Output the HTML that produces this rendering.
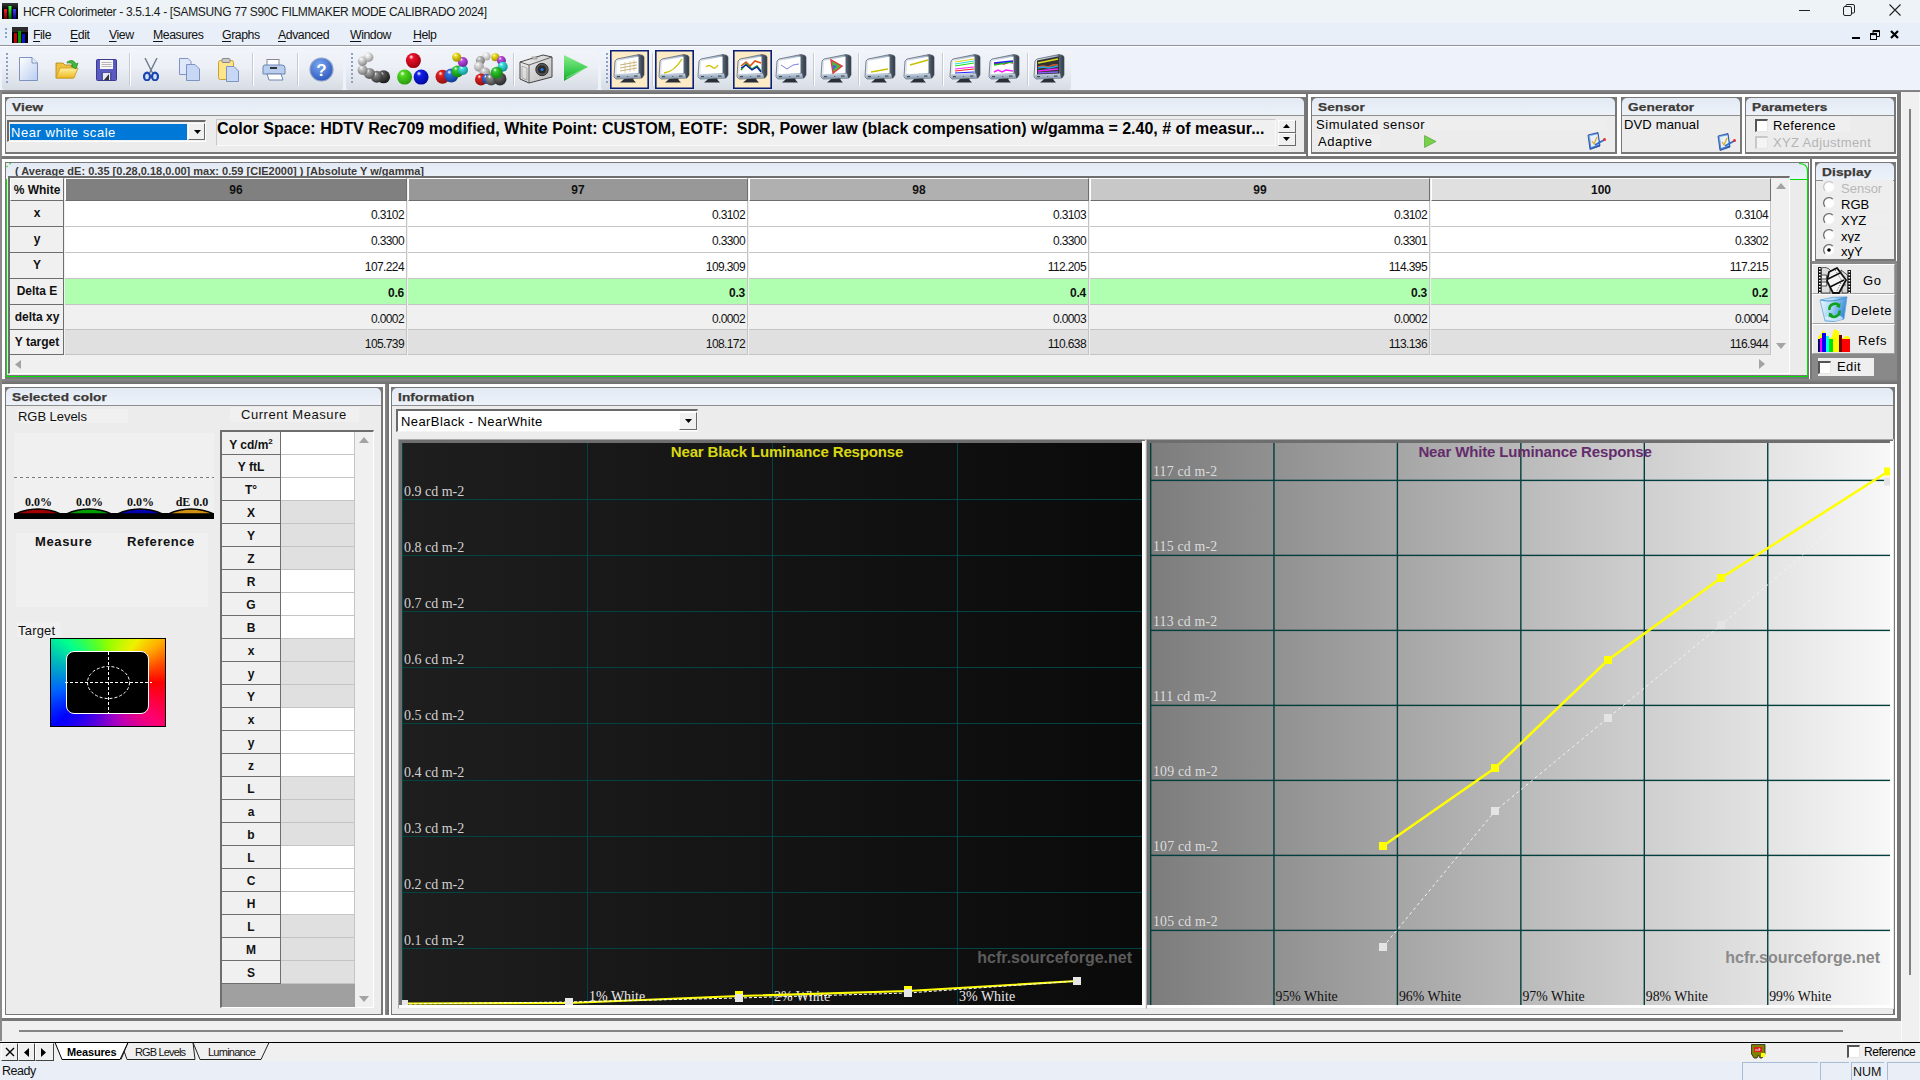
<!DOCTYPE html><html><head><meta charset="utf-8"><style>
*{margin:0;padding:0;box-sizing:border-box}
html,body{width:1920px;height:1080px;overflow:hidden;background:#f0f0f0;font-family:"Liberation Sans",sans-serif;color:#000}
div{position:absolute}
.t{white-space:nowrap;line-height:1}
.b{font-weight:bold}
.hdr{font-weight:bold;font-size:12px;color:#3b3b3b;letter-spacing:0.35px}
.ser{font-family:"Liberation Serif",serif}
</style></head><body>
<div style="left:0px;top:0px;width:1920px;height:23px;background:#edf3f6"></div>
<svg style="position:absolute;left:2px;top:3px" width="16" height="16" viewBox="0 0 16 16"><defs><linearGradient id="ti" x1="0" y1="0" x2="0" y2="1"><stop offset="0" stop-color="#3a3a3a"/><stop offset="0.4" stop-color="#050505"/><stop offset="1" stop-color="#000"/></linearGradient><linearGradient id="tr" x1="0" y1="0" x2="0" y2="1"><stop offset="0" stop-color="#ff2020"/><stop offset="1" stop-color="#700000"/></linearGradient><linearGradient id="tg" x1="0" y1="0" x2="0" y2="1"><stop offset="0" stop-color="#40ff40"/><stop offset="1" stop-color="#006000"/></linearGradient><linearGradient id="tb" x1="0" y1="0" x2="0" y2="1"><stop offset="0" stop-color="#4040ff"/><stop offset="1" stop-color="#000080"/></linearGradient></defs><rect width="16" height="16" fill="url(#ti)"/><rect x="2" y="6" width="3" height="10" fill="url(#tr)"/><rect x="6.5" y="3" width="3" height="13" fill="url(#tg)"/><rect x="11" y="6" width="3" height="10" fill="url(#tb)"/></svg>
<div class="t" style="left:23px;top:6px;font-size:12px;letter-spacing:-0.34px;color:#1a1a1a">HCFR Colorimeter - 3.5.1.4 - [SAMSUNG 77 S90C FILMMAKER MODE CALIBRADO 2024]</div>
<div style="left:1799px;top:10px;width:11px;height:1px;background:#222"></div>
<svg style="position:absolute;left:1843px;top:4px" width="12" height="12" viewBox="0 0 12 12"><rect x="0.5" y="2.5" width="8" height="9" rx="1.5" fill="none" stroke="#222"/><path d="M3 2.5 V1.5 Q3 0.5 4 0.5 H10 Q11.5 0.5 11.5 2 V8 Q11.5 9 10.5 9 H9" fill="none" stroke="#222"/></svg>
<svg style="position:absolute;left:1889px;top:4px" width="12" height="12" viewBox="0 0 12 12"><path d="M0.5 0.5 L11.5 11.5 M11.5 0.5 L0.5 11.5" stroke="#222" stroke-width="1.1"/></svg>
<div style="left:0px;top:23px;width:1920px;height:22px;background:#e9eff8"></div>
<div style="left:0px;top:45px;width:1920px;height:1px;background:#8f9399"></div>
<div style="left:0px;top:46px;width:1920px;height:1px;background:#ffffff"></div>
<svg style="position:absolute;left:5px;top:28px" width="3" height="12" viewBox="0 0 3 12"><rect x="0" y="0" width="2" height="2" fill="#8aa2c8"/><rect x="0" y="4" width="2" height="2" fill="#8aa2c8"/><rect x="0" y="8" width="2" height="2" fill="#8aa2c8"/></svg>
<svg style="position:absolute;left:12px;top:27px" width="16" height="16" viewBox="0 0 16 16"><rect width="16" height="16" fill="#000"/><rect x="0" y="0" width="16" height="5" fill="#2a2a2a"/><rect x="2" y="6" width="3" height="10" fill="#c00000"/><rect x="6" y="4" width="3" height="12" fill="#00a000"/><rect x="10" y="7" width="3" height="9" fill="#1010d0"/></svg>
<div class="t" style="left:33px;top:29px;font-size:12.3px;color:#111;letter-spacing:-0.45px"><span style="text-decoration:underline;text-underline-offset:2px">F</span>ile</div>
<div class="t" style="left:70px;top:29px;font-size:12.3px;color:#111;letter-spacing:-0.45px"><span style="text-decoration:underline;text-underline-offset:2px">E</span>dit</div>
<div class="t" style="left:109px;top:29px;font-size:12.3px;color:#111;letter-spacing:-0.45px"><span style="text-decoration:underline;text-underline-offset:2px">V</span>iew</div>
<div class="t" style="left:153px;top:29px;font-size:12.3px;color:#111;letter-spacing:-0.45px"><span style="text-decoration:underline;text-underline-offset:2px">M</span>easures</div>
<div class="t" style="left:222px;top:29px;font-size:12.3px;color:#111;letter-spacing:-0.45px"><span style="text-decoration:underline;text-underline-offset:2px">G</span>raphs</div>
<div class="t" style="left:278px;top:29px;font-size:12.3px;color:#111;letter-spacing:-0.45px"><span style="text-decoration:underline;text-underline-offset:2px">A</span>dvanced</div>
<div class="t" style="left:350px;top:29px;font-size:12.3px;color:#111;letter-spacing:-0.45px"><span style="text-decoration:underline;text-underline-offset:2px">W</span>indow</div>
<div class="t" style="left:413px;top:29px;font-size:12.3px;color:#111;letter-spacing:-0.45px"><span style="text-decoration:underline;text-underline-offset:2px">H</span>elp</div>
<div style="left:1852px;top:37px;width:8px;height:2px;background:#000"></div>
<svg style="position:absolute;left:1870px;top:30px" width="10" height="10" viewBox="0 0 10 10"><rect x="0.5" y="3.5" width="6" height="6" fill="none" stroke="#000"/><rect x="0.5" y="3.5" width="6" height="1.6" fill="#000"/><path d="M3 3 V0.5 H9.5 V6.5 H7" fill="none" stroke="#000"/><rect x="3" y="0.5" width="6.5" height="1.6" fill="#000"/></svg>
<svg style="position:absolute;left:1890px;top:30px" width="9" height="9" viewBox="0 0 9 9"><path d="M1 1 L8 8 M8 1 L1 8" stroke="#000" stroke-width="2.2"/></svg>
<div style="left:0px;top:47px;width:1920px;height:43px;background:#eef3fb"></div>
<div style="left:2px;top:49px;width:341px;height:41px;background:linear-gradient(#f1f4f9 0%,#eceff5 45%,#d7dce4 100%);border-radius:3px"></div>
<div style="left:346px;top:49px;width:252px;height:41px;background:linear-gradient(#f1f4f9 0%,#eceff5 45%,#d7dce4 100%);border-radius:3px"></div>
<div style="left:601px;top:49px;width:470px;height:41px;background:linear-gradient(#f1f4f9 0%,#eceff5 45%,#d7dce4 100%);border-radius:3px"></div>
<svg style="position:absolute;left:6px;top:53px" width="3" height="30" viewBox="0 0 3 30"><rect x="0" y="0" width="2" height="2" fill="#8aa2c8"/><rect x="0" y="4" width="2" height="2" fill="#8aa2c8"/><rect x="0" y="8" width="2" height="2" fill="#8aa2c8"/><rect x="0" y="12" width="2" height="2" fill="#8aa2c8"/><rect x="0" y="16" width="2" height="2" fill="#8aa2c8"/><rect x="0" y="20" width="2" height="2" fill="#8aa2c8"/><rect x="0" y="24" width="2" height="2" fill="#8aa2c8"/><rect x="0" y="28" width="2" height="2" fill="#8aa2c8"/></svg>
<svg style="position:absolute;left:351px;top:53px" width="3" height="30" viewBox="0 0 3 30"><rect x="0" y="0" width="2" height="2" fill="#8aa2c8"/><rect x="0" y="4" width="2" height="2" fill="#8aa2c8"/><rect x="0" y="8" width="2" height="2" fill="#8aa2c8"/><rect x="0" y="12" width="2" height="2" fill="#8aa2c8"/><rect x="0" y="16" width="2" height="2" fill="#8aa2c8"/><rect x="0" y="20" width="2" height="2" fill="#8aa2c8"/><rect x="0" y="24" width="2" height="2" fill="#8aa2c8"/><rect x="0" y="28" width="2" height="2" fill="#8aa2c8"/></svg>
<svg style="position:absolute;left:606px;top:53px" width="3" height="30" viewBox="0 0 3 30"><rect x="0" y="0" width="2" height="2" fill="#8aa2c8"/><rect x="0" y="4" width="2" height="2" fill="#8aa2c8"/><rect x="0" y="8" width="2" height="2" fill="#8aa2c8"/><rect x="0" y="12" width="2" height="2" fill="#8aa2c8"/><rect x="0" y="16" width="2" height="2" fill="#8aa2c8"/><rect x="0" y="20" width="2" height="2" fill="#8aa2c8"/><rect x="0" y="24" width="2" height="2" fill="#8aa2c8"/><rect x="0" y="28" width="2" height="2" fill="#8aa2c8"/></svg>
<svg style="position:absolute;left:19px;top:57px" width="19" height="24" viewBox="0 0 19 24"><defs><linearGradient id="pg" x1="0" y1="0" x2="1" y2="1"><stop offset="0" stop-color="#ffffff"/><stop offset="1" stop-color="#b9cdf0"/></linearGradient></defs><path d="M0.5 0.5 H13 L18.5 6 V23.5 H0.5 Z" fill="url(#pg)" stroke="#7f93c0"/><path d="M13 0.5 V6 H18.5" fill="#e6eefb" stroke="#7f93c0"/></svg>
<svg style="position:absolute;left:55px;top:58px" width="24" height="22" viewBox="0 0 24 22"><defs><linearGradient id="fo" x1="0" y1="0" x2="0" y2="1"><stop offset="0" stop-color="#fff2a0"/><stop offset="1" stop-color="#f0b820"/></linearGradient></defs><path d="M1 5 H8 L10 7 H18 V20 H1 Z" fill="#f0c040" stroke="#b08418" stroke-width="0.8"/><path d="M1 20 L5 10 H23 L19 20 Z" fill="url(#fo)" stroke="#c79a20" stroke-width="0.8"/><path d="M12 4 Q18 0 21 6 L23 5 L21 11 L16 8 L18 7 Q16 4 12 5Z" fill="#3cb83c" stroke="#1d7a1d" stroke-width="0.6"/></svg>
<svg style="position:absolute;left:96px;top:59px" width="21" height="22" viewBox="0 0 21 22"><rect x="0.5" y="0.5" width="20" height="21" rx="1" fill="#5a5ac0" stroke="#3b3b90"/><rect x="4" y="1" width="13" height="9" fill="#f8f8f8"/><path d="M5.5 3.5H15.5M5.5 5.5H15.5M5.5 7.5H15.5" stroke="#999" stroke-width="0.7"/><rect x="5" y="13" width="11" height="8" fill="#5050a8"/><rect x="7" y="14" width="7" height="7" fill="#e8e8f4"/><path d="M8 21 L13 15 V21Z" fill="#333"/></svg>
<div style="left:129px;top:53px;width:2px;height:33px;border-left:1px solid #c5cad3;border-right:1px solid #ffffff"></div>
<svg style="position:absolute;left:143px;top:58px" width="16" height="23" viewBox="0 0 16 23"><path d="M2 0 L10 16 M14 0 L6 16" stroke="#6a7a8a" stroke-width="1.4"/><ellipse cx="4" cy="18.5" rx="3" ry="3.8" fill="#cfe0f8" stroke="#1a44b0" stroke-width="2.2"/><ellipse cx="12" cy="18.5" rx="3" ry="3.8" fill="#cfe0f8" stroke="#1a44b0" stroke-width="2.2"/></svg>
<svg style="position:absolute;left:179px;top:58px" width="22" height="23" viewBox="0 0 22 23"><path d="M0.5 0.5H9L12 3.5V16.5H0.5Z" fill="#dfe8fb" stroke="#7f93c0"/><path d="M7.5 6.5H16L20.5 11V22.5H7.5Z" fill="#c7d7f6" stroke="#7f93c0"/></svg>
<svg style="position:absolute;left:218px;top:58px" width="21" height="24" viewBox="0 0 21 24"><rect x="0.5" y="2.5" width="15" height="19" rx="2" fill="#ffe58a" stroke="#c8a030"/><rect x="4" y="0.5" width="8" height="4" rx="1" fill="#c9c9c9" stroke="#888"/><path d="M8.5 8.5H16L20.5 13V23.5H8.5Z" fill="#c7d7f6" stroke="#7f93c0"/></svg>
<div style="left:252px;top:53px;width:2px;height:33px;border-left:1px solid #c5cad3;border-right:1px solid #ffffff"></div>
<svg style="position:absolute;left:262px;top:59px" width="24" height="23" viewBox="0 0 24 23"><rect x="5" y="0.5" width="12" height="7" fill="#fff" stroke="#889"/><path d="M1 8 Q1 6 3 6 H20 Q23 6 23 9 V15 H1Z" fill="#b9cdef" stroke="#6d86b0"/><rect x="8" y="8" width="7" height="2" fill="#333"/><path d="M5 15 H19 L21 21 H7Z" fill="#ffffff" stroke="#6d86b0"/></svg>
<div style="left:297px;top:53px;width:2px;height:33px;border-left:1px solid #c5cad3;border-right:1px solid #ffffff"></div>
<svg style="position:absolute;left:309px;top:57px" width="25" height="25" viewBox="0 0 25 25"><defs><radialGradient id="hg" cx="0.4" cy="0.3" r="0.8"><stop offset="0" stop-color="#7aa6f0"/><stop offset="1" stop-color="#2450b8"/></radialGradient></defs><circle cx="12.5" cy="12.5" r="11.5" fill="url(#hg)" stroke="#8ea4c8" stroke-width="1.2"/><text x="12.5" y="19" font-family="Liberation Sans" font-weight="bold" font-size="17" fill="#fff" text-anchor="middle">?</text></svg>
<svg style="position:absolute;left:340px;top:50px" width="270" height="40" viewBox="0 0 270 40"><defs><radialGradient id="bg_0" cx="0.4" cy="0.35" r="0.65" fx="0.35" fy="0.25"><stop offset="0" stop-color="#ffffff"/><stop offset="0.25" stop-color="#555"/><stop offset="1" stop-color="#1a1a1a"/></radialGradient><radialGradient id="bg_1" cx="0.4" cy="0.35" r="0.65" fx="0.35" fy="0.25"><stop offset="0" stop-color="#ffffff"/><stop offset="0.25" stop-color="#888"/><stop offset="1" stop-color="#333"/></radialGradient><radialGradient id="bg_2" cx="0.4" cy="0.35" r="0.65" fx="0.35" fy="0.25"><stop offset="0" stop-color="#ffffff"/><stop offset="0.25" stop-color="#aaa"/><stop offset="1" stop-color="#555"/></radialGradient><radialGradient id="bg_3" cx="0.4" cy="0.35" r="0.65" fx="0.35" fy="0.25"><stop offset="0" stop-color="#ffffff"/><stop offset="0.25" stop-color="#ccc"/><stop offset="1" stop-color="#777"/></radialGradient><radialGradient id="bg_4" cx="0.4" cy="0.35" r="0.65" fx="0.35" fy="0.25"><stop offset="0" stop-color="#ffffff"/><stop offset="0.25" stop-color="#ddd"/><stop offset="1" stop-color="#888"/></radialGradient><radialGradient id="bg_5" cx="0.4" cy="0.35" r="0.65" fx="0.35" fy="0.25"><stop offset="0" stop-color="#ffffff"/><stop offset="0.25" stop-color="#eee"/><stop offset="1" stop-color="#999"/></radialGradient></defs><circle cx="43.60000000000002" cy="26.799999999999997" r="6.5" fill="url(#bg_0)"/><circle cx="36.80000000000001" cy="26.799999999999997" r="6" fill="url(#bg_1)"/><circle cx="29.399999999999977" cy="23.400000000000006" r="5.5" fill="url(#bg_2)"/><circle cx="22.600000000000023" cy="20" r="5" fill="url(#bg_3)"/><circle cx="22.600000000000023" cy="11.200000000000003" r="4.7" fill="url(#bg_4)"/><circle cx="28.69999999999999" cy="7.200000000000003" r="4.7" fill="url(#bg_5)"/></svg>
<svg style="position:absolute;left:340px;top:50px" width="270" height="40" viewBox="0 0 270 40"><defs><radialGradient id="br_0" cx="0.4" cy="0.35" r="0.65" fx="0.35" fy="0.25"><stop offset="0" stop-color="#ffffff"/><stop offset="0.25" stop-color="#e8102a"/><stop offset="1" stop-color="#a00010"/></radialGradient><radialGradient id="br_1" cx="0.4" cy="0.35" r="0.65" fx="0.35" fy="0.25"><stop offset="0" stop-color="#ffffff"/><stop offset="0.25" stop-color="#50d820"/><stop offset="1" stop-color="#2a9a10"/></radialGradient><radialGradient id="br_2" cx="0.4" cy="0.35" r="0.65" fx="0.35" fy="0.25"><stop offset="0" stop-color="#ffffff"/><stop offset="0.25" stop-color="#1020e8"/><stop offset="1" stop-color="#0008a0"/></radialGradient></defs><circle cx="73.39999999999998" cy="10.600000000000001" r="7.5" fill="url(#br_0)"/><circle cx="64.60000000000002" cy="27.099999999999994" r="7.5" fill="url(#br_1)"/><circle cx="81.10000000000002" cy="27.099999999999994" r="7.5" fill="url(#br_2)"/></svg>
<svg style="position:absolute;left:340px;top:50px" width="270" height="40" viewBox="0 0 270 40"><defs><radialGradient id="bc_0" cx="0.4" cy="0.35" r="0.65" fx="0.35" fy="0.25"><stop offset="0" stop-color="#ffffff"/><stop offset="0.25" stop-color="#e02020"/><stop offset="1" stop-color="#901010"/></radialGradient><radialGradient id="bc_1" cx="0.4" cy="0.35" r="0.65" fx="0.35" fy="0.25"><stop offset="0" stop-color="#ffffff"/><stop offset="0.25" stop-color="#3070e0"/><stop offset="1" stop-color="#103a90"/></radialGradient><radialGradient id="bc_2" cx="0.4" cy="0.35" r="0.65" fx="0.35" fy="0.25"><stop offset="0" stop-color="#ffffff"/><stop offset="0.25" stop-color="#30c830"/><stop offset="1" stop-color="#108010"/></radialGradient><radialGradient id="bc_3" cx="0.4" cy="0.35" r="0.65" fx="0.35" fy="0.25"><stop offset="0" stop-color="#ffffff"/><stop offset="0.25" stop-color="#40e0e0"/><stop offset="1" stop-color="#109090"/></radialGradient><radialGradient id="bc_4" cx="0.4" cy="0.35" r="0.65" fx="0.35" fy="0.25"><stop offset="0" stop-color="#ffffff"/><stop offset="0.25" stop-color="#c050e0"/><stop offset="1" stop-color="#7020a0"/></radialGradient><radialGradient id="bc_5" cx="0.4" cy="0.35" r="0.65" fx="0.35" fy="0.25"><stop offset="0" stop-color="#ffffff"/><stop offset="0.25" stop-color="#f0e020"/><stop offset="1" stop-color="#a09000"/></radialGradient></defs><circle cx="102.5" cy="26.799999999999997" r="7" fill="url(#bc_0)"/><circle cx="111.30000000000001" cy="25.5" r="7" fill="url(#bc_1)"/><circle cx="117.39999999999998" cy="21.400000000000006" r="6" fill="url(#bc_2)"/><circle cx="123" cy="20" r="5" fill="url(#bc_3)"/><circle cx="122.80000000000001" cy="12" r="5" fill="url(#bc_4)"/><circle cx="116.69999999999999" cy="7.200000000000003" r="4.5" fill="url(#bc_5)"/></svg>
<svg style="position:absolute;left:340px;top:50px" width="270" height="40" viewBox="0 0 270 40"><defs><radialGradient id="bm_0" cx="0.4" cy="0.35" r="0.65" fx="0.35" fy="0.25"><stop offset="0" stop-color="#ffffff"/><stop offset="0.25" stop-color="#eee"/><stop offset="1" stop-color="#aaa"/></radialGradient><radialGradient id="bm_1" cx="0.4" cy="0.35" r="0.65" fx="0.35" fy="0.25"><stop offset="0" stop-color="#ffffff"/><stop offset="0.25" stop-color="#f0e020"/><stop offset="1" stop-color="#a09000"/></radialGradient><radialGradient id="bm_2" cx="0.4" cy="0.35" r="0.65" fx="0.35" fy="0.25"><stop offset="0" stop-color="#ffffff"/><stop offset="0.25" stop-color="#c050e0"/><stop offset="1" stop-color="#7020a0"/></radialGradient><radialGradient id="bm_3" cx="0.4" cy="0.35" r="0.65" fx="0.35" fy="0.25"><stop offset="0" stop-color="#ffffff"/><stop offset="0.25" stop-color="#40e0e0"/><stop offset="1" stop-color="#109090"/></radialGradient><radialGradient id="bm_4" cx="0.4" cy="0.35" r="0.65" fx="0.35" fy="0.25"><stop offset="0" stop-color="#ffffff"/><stop offset="0.25" stop-color="#bbb"/><stop offset="1" stop-color="#777"/></radialGradient><radialGradient id="bm_5" cx="0.4" cy="0.35" r="0.65" fx="0.35" fy="0.25"><stop offset="0" stop-color="#ffffff"/><stop offset="0.25" stop-color="#ddd"/><stop offset="1" stop-color="#999"/></radialGradient><radialGradient id="bm_6" cx="0.4" cy="0.35" r="0.65" fx="0.35" fy="0.25"><stop offset="0" stop-color="#ffffff"/><stop offset="0.25" stop-color="#ccc"/><stop offset="1" stop-color="#888"/></radialGradient><radialGradient id="bm_7" cx="0.4" cy="0.35" r="0.65" fx="0.35" fy="0.25"><stop offset="0" stop-color="#ffffff"/><stop offset="0.25" stop-color="#e02020"/><stop offset="1" stop-color="#901010"/></radialGradient><radialGradient id="bm_8" cx="0.4" cy="0.35" r="0.65" fx="0.35" fy="0.25"><stop offset="0" stop-color="#ffffff"/><stop offset="0.25" stop-color="#3070e0"/><stop offset="1" stop-color="#103a90"/></radialGradient><radialGradient id="bm_9" cx="0.4" cy="0.35" r="0.65" fx="0.35" fy="0.25"><stop offset="0" stop-color="#ffffff"/><stop offset="0.25" stop-color="#888"/><stop offset="1" stop-color="#444"/></radialGradient><radialGradient id="bm_10" cx="0.4" cy="0.35" r="0.65" fx="0.35" fy="0.25"><stop offset="0" stop-color="#ffffff"/><stop offset="0.25" stop-color="#666"/><stop offset="1" stop-color="#2a2a2a"/></radialGradient><radialGradient id="bm_11" cx="0.4" cy="0.35" r="0.65" fx="0.35" fy="0.25"><stop offset="0" stop-color="#ffffff"/><stop offset="0.25" stop-color="#30c830"/><stop offset="1" stop-color="#108010"/></radialGradient></defs><circle cx="146.5" cy="6.5" r="4" fill="url(#bm_0)"/><circle cx="155.3" cy="7.200000000000003" r="4" fill="url(#bm_1)"/><circle cx="161.39999999999998" cy="10.600000000000001" r="4.5" fill="url(#bm_2)"/><circle cx="162.7" cy="16.700000000000003" r="5" fill="url(#bm_3)"/><circle cx="140.39999999999998" cy="10.600000000000001" r="4.5" fill="url(#bm_4)"/><circle cx="139" cy="16.700000000000003" r="5" fill="url(#bm_5)"/><circle cx="145" cy="22.799999999999997" r="5.5" fill="url(#bm_6)"/><circle cx="141" cy="29.5" r="6" fill="url(#bm_7)"/><circle cx="147" cy="28.900000000000006" r="5" fill="url(#bm_8)"/><circle cx="151.2" cy="29.5" r="6" fill="url(#bm_9)"/><circle cx="160" cy="28.900000000000006" r="6.5" fill="url(#bm_10)"/><circle cx="156.7" cy="22.799999999999997" r="6" fill="url(#bm_11)"/></svg>
<div style="left:513px;top:53px;width:2px;height:33px;border-left:1px solid #c5cad3;border-right:1px solid #ffffff"></div>
<svg style="position:absolute;left:519px;top:53px" width="35" height="31" viewBox="0 0 35 31"><defs><linearGradient id="cf" x1="0" y1="0" x2="1" y2="1"><stop offset="0" stop-color="#f4f4f4"/><stop offset="1" stop-color="#b8b8b8"/></linearGradient></defs><path d="M1 9 L24 2 L33 4 V24 L10 30 L1 26 Z" fill="url(#cf)" stroke="#444" stroke-width="1"/><path d="M1 9 L10 12 L33 4 M10 12 V30" stroke="#555" fill="none" stroke-width="0.9"/><path d="M3 13 L8 15 V27 L3 25Z" fill="none" stroke="#999" stroke-width="0.7"/><circle cx="23" cy="16.5" r="6.2" fill="#555" stroke="#333"/><circle cx="23" cy="16.5" r="4" fill="#2a2a2a"/><circle cx="23" cy="16.5" r="1.6" fill="#1a78e8"/><rect x="13" y="4" width="5" height="2" fill="#ccc" stroke="#666" stroke-width="0.5"/></svg>
<svg style="position:absolute;left:563px;top:54px" width="27" height="28" viewBox="0 0 27 28"><defs><linearGradient id="gp" x1="0" y1="0" x2="0" y2="1"><stop offset="0" stop-color="#8cec8c"/><stop offset="0.6" stop-color="#3ccc50"/><stop offset="1" stop-color="#18a830"/></linearGradient></defs><path d="M1 1 L25 13 L1 27 Z" fill="url(#gp)"/><path d="M3 24 L23 14" stroke="#c8f8c8" stroke-width="0.8" opacity="0.7"/></svg>
<div style="left:610px;top:50px;width:39px;height:39px;background:#fdebc6;border:1px solid #0a1f7a;box-shadow:inset 0 0 0 0.6px #0a1f7a"></div>
<svg style="position:absolute;left:613px;top:53px" width="32" height="32" viewBox="0 0 32 32"><defs><linearGradient id="mg613" x1="0" y1="0" x2="1" y2="0"><stop offset="0" stop-color="#e6ecf3"/><stop offset="0.75" stop-color="#9eb2c8"/><stop offset="0.82" stop-color="#5a6878"/><stop offset="1" stop-color="#2e3742"/></linearGradient><linearGradient id="mb613" x1="0" y1="0" x2="0" y2="1"><stop offset="0" stop-color="#c9d6e4"/><stop offset="1" stop-color="#7f93aa"/></linearGradient></defs>
<path d="M2 8 L4 6 L26 1.5 L30 2.5 L31 4 V22 L29 25 L3 26 L1 24 Z" fill="url(#mg613)" stroke="#4d5866" stroke-width="0.7"/>
<path d="M4 8 L25.5 3.5 V20 L3.5 21 Z" fill="#ffffff"/>
<g stroke="#c9b27a" stroke-width="1"><path d="M7 12 L24 9 M7 15 L24 12 M7 18 L24 15"/><path d="M12 9 V20 M17 8 V19 M21 7 V18" stroke-width="0.6"/></g>
<path d="M2 21.5 L27 20.5 L28 25 L2.5 26 Z" fill="url(#mb613)"/>
<rect x="4" y="23" width="3" height="1.2" fill="#4a4a4a"/><rect x="21" y="22.5" width="3.5" height="1.2" fill="#4a4a4a"/><rect x="14" y="23" width="1.2" height="1" fill="#666"/>
<path d="M11 26 L20 25.5 L21 27.5 L23 29.5 H7 L9.5 27.5 Z" fill="#2a2f36"/></svg>
<div style="left:652px;top:53px;width:2px;height:33px;border-left:1px solid #c5cad3;border-right:1px solid #ffffff"></div>
<div style="left:655px;top:50px;width:39px;height:39px;background:#fdebc6;border:1px solid #0a1f7a;box-shadow:inset 0 0 0 0.6px #0a1f7a"></div>
<svg style="position:absolute;left:658px;top:53px" width="32" height="32" viewBox="0 0 32 32"><defs><linearGradient id="mg658" x1="0" y1="0" x2="1" y2="0"><stop offset="0" stop-color="#e6ecf3"/><stop offset="0.75" stop-color="#9eb2c8"/><stop offset="0.82" stop-color="#5a6878"/><stop offset="1" stop-color="#2e3742"/></linearGradient><linearGradient id="mb658" x1="0" y1="0" x2="0" y2="1"><stop offset="0" stop-color="#c9d6e4"/><stop offset="1" stop-color="#7f93aa"/></linearGradient></defs>
<path d="M2 8 L4 6 L26 1.5 L30 2.5 L31 4 V22 L29 25 L3 26 L1 24 Z" fill="url(#mg658)" stroke="#4d5866" stroke-width="0.7"/>
<path d="M4 8 L25.5 3.5 V20 L3.5 21 Z" fill="#ffffff"/>
<path d="M6 20 Q16 19 24 6" stroke="#c8c000" stroke-width="1.4" fill="none"/>
<path d="M2 21.5 L27 20.5 L28 25 L2.5 26 Z" fill="url(#mb658)"/>
<rect x="4" y="23" width="3" height="1.2" fill="#4a4a4a"/><rect x="21" y="22.5" width="3.5" height="1.2" fill="#4a4a4a"/><rect x="14" y="23" width="1.2" height="1" fill="#666"/>
<path d="M11 26 L20 25.5 L21 27.5 L23 29.5 H7 L9.5 27.5 Z" fill="#2a2f36"/></svg>
<svg style="position:absolute;left:697px;top:53px" width="32" height="32" viewBox="0 0 32 32"><defs><linearGradient id="mg697" x1="0" y1="0" x2="1" y2="0"><stop offset="0" stop-color="#e6ecf3"/><stop offset="0.75" stop-color="#9eb2c8"/><stop offset="0.82" stop-color="#5a6878"/><stop offset="1" stop-color="#2e3742"/></linearGradient><linearGradient id="mb697" x1="0" y1="0" x2="0" y2="1"><stop offset="0" stop-color="#c9d6e4"/><stop offset="1" stop-color="#7f93aa"/></linearGradient></defs>
<path d="M2 8 L4 6 L26 1.5 L30 2.5 L31 4 V22 L29 25 L3 26 L1 24 Z" fill="url(#mg697)" stroke="#4d5866" stroke-width="0.7"/>
<path d="M4 8 L25.5 3.5 V20 L3.5 21 Z" fill="#ffffff"/>
<path d="M9 14 Q12 11 15 14 Q18 17 21 12" stroke="#d0c000" stroke-width="1.4" fill="none"/>
<path d="M2 21.5 L27 20.5 L28 25 L2.5 26 Z" fill="url(#mb697)"/>
<rect x="4" y="23" width="3" height="1.2" fill="#4a4a4a"/><rect x="21" y="22.5" width="3.5" height="1.2" fill="#4a4a4a"/><rect x="14" y="23" width="1.2" height="1" fill="#666"/>
<path d="M11 26 L20 25.5 L21 27.5 L23 29.5 H7 L9.5 27.5 Z" fill="#2a2f36"/></svg>
<div style="left:733px;top:50px;width:39px;height:39px;background:#fdebc6;border:1px solid #0a1f7a;box-shadow:inset 0 0 0 0.6px #0a1f7a"></div>
<svg style="position:absolute;left:736px;top:53px" width="32" height="32" viewBox="0 0 32 32"><defs><linearGradient id="mg736" x1="0" y1="0" x2="1" y2="0"><stop offset="0" stop-color="#e6ecf3"/><stop offset="0.75" stop-color="#9eb2c8"/><stop offset="0.82" stop-color="#5a6878"/><stop offset="1" stop-color="#2e3742"/></linearGradient><linearGradient id="mb736" x1="0" y1="0" x2="0" y2="1"><stop offset="0" stop-color="#c9d6e4"/><stop offset="1" stop-color="#7f93aa"/></linearGradient></defs>
<path d="M2 8 L4 6 L26 1.5 L30 2.5 L31 4 V22 L29 25 L3 26 L1 24 Z" fill="url(#mg736)" stroke="#4d5866" stroke-width="0.7"/>
<path d="M4 8 L25.5 3.5 V20 L3.5 21 Z" fill="#ffffff"/>
<path d="M5 13 L10 9 L14 13 L19 8 L25 10" stroke="#e05010" stroke-width="1.6" fill="none"/><path d="M5 17 L10 11 L16 16 L21 13 L25 18" stroke="#20a020" stroke-width="1.6" fill="none"/><path d="M5 15 L10 12 L16 17 L21 14 L25 19" stroke="#1020b0" stroke-width="1.4" fill="none"/>
<path d="M2 21.5 L27 20.5 L28 25 L2.5 26 Z" fill="url(#mb736)"/>
<rect x="4" y="23" width="3" height="1.2" fill="#4a4a4a"/><rect x="21" y="22.5" width="3.5" height="1.2" fill="#4a4a4a"/><rect x="14" y="23" width="1.2" height="1" fill="#666"/>
<path d="M11 26 L20 25.5 L21 27.5 L23 29.5 H7 L9.5 27.5 Z" fill="#2a2f36"/></svg>
<svg style="position:absolute;left:775px;top:53px" width="32" height="32" viewBox="0 0 32 32"><defs><linearGradient id="mg775" x1="0" y1="0" x2="1" y2="0"><stop offset="0" stop-color="#e6ecf3"/><stop offset="0.75" stop-color="#9eb2c8"/><stop offset="0.82" stop-color="#5a6878"/><stop offset="1" stop-color="#2e3742"/></linearGradient><linearGradient id="mb775" x1="0" y1="0" x2="0" y2="1"><stop offset="0" stop-color="#c9d6e4"/><stop offset="1" stop-color="#7f93aa"/></linearGradient></defs>
<path d="M2 8 L4 6 L26 1.5 L30 2.5 L31 4 V22 L29 25 L3 26 L1 24 Z" fill="url(#mg775)" stroke="#4d5866" stroke-width="0.7"/>
<path d="M4 8 L25.5 3.5 V20 L3.5 21 Z" fill="#ffffff"/>
<path d="M6 12 L12 16 L18 12 L24 11" stroke="#8080e0" stroke-width="1" fill="none"/>
<path d="M2 21.5 L27 20.5 L28 25 L2.5 26 Z" fill="url(#mb775)"/>
<rect x="4" y="23" width="3" height="1.2" fill="#4a4a4a"/><rect x="21" y="22.5" width="3.5" height="1.2" fill="#4a4a4a"/><rect x="14" y="23" width="1.2" height="1" fill="#666"/>
<path d="M11 26 L20 25.5 L21 27.5 L23 29.5 H7 L9.5 27.5 Z" fill="#2a2f36"/></svg>
<div style="left:813px;top:53px;width:2px;height:33px;border-left:1px solid #c5cad3;border-right:1px solid #ffffff"></div>
<svg style="position:absolute;left:820px;top:53px" width="32" height="32" viewBox="0 0 32 32"><defs><linearGradient id="mg820" x1="0" y1="0" x2="1" y2="0"><stop offset="0" stop-color="#e6ecf3"/><stop offset="0.75" stop-color="#9eb2c8"/><stop offset="0.82" stop-color="#5a6878"/><stop offset="1" stop-color="#2e3742"/></linearGradient><linearGradient id="mb820" x1="0" y1="0" x2="0" y2="1"><stop offset="0" stop-color="#c9d6e4"/><stop offset="1" stop-color="#7f93aa"/></linearGradient></defs>
<path d="M2 8 L4 6 L26 1.5 L30 2.5 L31 4 V22 L29 25 L3 26 L1 24 Z" fill="url(#mg820)" stroke="#4d5866" stroke-width="0.7"/>
<path d="M4 8 L25.5 3.5 V20 L3.5 21 Z" fill="#ffffff"/>
<path d="M11 7 L22 13 L13 20 Z" fill="#40c040"/><path d="M11 7 L22 13 L13 20 Z" fill="none" stroke="#e04040" stroke-width="1.5"/><path d="M13 12 L17 13 L13 17Z" fill="#4060f0"/>
<path d="M2 21.5 L27 20.5 L28 25 L2.5 26 Z" fill="url(#mb820)"/>
<rect x="4" y="23" width="3" height="1.2" fill="#4a4a4a"/><rect x="21" y="22.5" width="3.5" height="1.2" fill="#4a4a4a"/><rect x="14" y="23" width="1.2" height="1" fill="#666"/>
<path d="M11 26 L20 25.5 L21 27.5 L23 29.5 H7 L9.5 27.5 Z" fill="#2a2f36"/></svg>
<div style="left:858px;top:53px;width:2px;height:33px;border-left:1px solid #c5cad3;border-right:1px solid #ffffff"></div>
<svg style="position:absolute;left:864px;top:53px" width="32" height="32" viewBox="0 0 32 32"><defs><linearGradient id="mg864" x1="0" y1="0" x2="1" y2="0"><stop offset="0" stop-color="#e6ecf3"/><stop offset="0.75" stop-color="#9eb2c8"/><stop offset="0.82" stop-color="#5a6878"/><stop offset="1" stop-color="#2e3742"/></linearGradient><linearGradient id="mb864" x1="0" y1="0" x2="0" y2="1"><stop offset="0" stop-color="#c9d6e4"/><stop offset="1" stop-color="#7f93aa"/></linearGradient></defs>
<path d="M2 8 L4 6 L26 1.5 L30 2.5 L31 4 V22 L29 25 L3 26 L1 24 Z" fill="url(#mg864)" stroke="#4d5866" stroke-width="0.7"/>
<path d="M4 8 L25.5 3.5 V20 L3.5 21 Z" fill="#ffffff"/>
<path d="M7 19 L24 16" stroke="#c8c000" stroke-width="1.4"/>
<path d="M2 21.5 L27 20.5 L28 25 L2.5 26 Z" fill="url(#mb864)"/>
<rect x="4" y="23" width="3" height="1.2" fill="#4a4a4a"/><rect x="21" y="22.5" width="3.5" height="1.2" fill="#4a4a4a"/><rect x="14" y="23" width="1.2" height="1" fill="#666"/>
<path d="M11 26 L20 25.5 L21 27.5 L23 29.5 H7 L9.5 27.5 Z" fill="#2a2f36"/></svg>
<svg style="position:absolute;left:903px;top:53px" width="32" height="32" viewBox="0 0 32 32"><defs><linearGradient id="mg903" x1="0" y1="0" x2="1" y2="0"><stop offset="0" stop-color="#e6ecf3"/><stop offset="0.75" stop-color="#9eb2c8"/><stop offset="0.82" stop-color="#5a6878"/><stop offset="1" stop-color="#2e3742"/></linearGradient><linearGradient id="mb903" x1="0" y1="0" x2="0" y2="1"><stop offset="0" stop-color="#c9d6e4"/><stop offset="1" stop-color="#7f93aa"/></linearGradient></defs>
<path d="M2 8 L4 6 L26 1.5 L30 2.5 L31 4 V22 L29 25 L3 26 L1 24 Z" fill="url(#mg903)" stroke="#4d5866" stroke-width="0.7"/>
<path d="M4 8 L25.5 3.5 V20 L3.5 21 Z" fill="#ffffff"/>
<path d="M7 12 L25 7" stroke="#c8c000" stroke-width="1.4"/>
<path d="M2 21.5 L27 20.5 L28 25 L2.5 26 Z" fill="url(#mb903)"/>
<rect x="4" y="23" width="3" height="1.2" fill="#4a4a4a"/><rect x="21" y="22.5" width="3.5" height="1.2" fill="#4a4a4a"/><rect x="14" y="23" width="1.2" height="1" fill="#666"/>
<path d="M11 26 L20 25.5 L21 27.5 L23 29.5 H7 L9.5 27.5 Z" fill="#2a2f36"/></svg>
<div style="left:942px;top:53px;width:2px;height:33px;border-left:1px solid #c5cad3;border-right:1px solid #ffffff"></div>
<svg style="position:absolute;left:949px;top:53px" width="32" height="32" viewBox="0 0 32 32"><defs><linearGradient id="mg949" x1="0" y1="0" x2="1" y2="0"><stop offset="0" stop-color="#e6ecf3"/><stop offset="0.75" stop-color="#9eb2c8"/><stop offset="0.82" stop-color="#5a6878"/><stop offset="1" stop-color="#2e3742"/></linearGradient><linearGradient id="mb949" x1="0" y1="0" x2="0" y2="1"><stop offset="0" stop-color="#c9d6e4"/><stop offset="1" stop-color="#7f93aa"/></linearGradient></defs>
<path d="M2 8 L4 6 L26 1.5 L30 2.5 L31 4 V22 L29 25 L3 26 L1 24 Z" fill="url(#mg949)" stroke="#4d5866" stroke-width="0.7"/>
<path d="M4 8 L25.5 3.5 V20 L3.5 21 Z" fill="#ffffff"/>
<g stroke-width="1.2" fill="none"><path d="M6 9 L25 6" stroke="#e0d020"/><path d="M6 11 L25 8" stroke="#20e0e0"/><path d="M6 13 L25 10" stroke="#20e020"/><path d="M6 16 L25 14" stroke="#ff20ff"/><path d="M6 18 L25 16" stroke="#ff2020"/><path d="M6 20 L25 19" stroke="#2020ff"/></g>
<path d="M2 21.5 L27 20.5 L28 25 L2.5 26 Z" fill="url(#mb949)"/>
<rect x="4" y="23" width="3" height="1.2" fill="#4a4a4a"/><rect x="21" y="22.5" width="3.5" height="1.2" fill="#4a4a4a"/><rect x="14" y="23" width="1.2" height="1" fill="#666"/>
<path d="M11 26 L20 25.5 L21 27.5 L23 29.5 H7 L9.5 27.5 Z" fill="#2a2f36"/></svg>
<svg style="position:absolute;left:988px;top:53px" width="32" height="32" viewBox="0 0 32 32"><defs><linearGradient id="mg988" x1="0" y1="0" x2="1" y2="0"><stop offset="0" stop-color="#e6ecf3"/><stop offset="0.75" stop-color="#9eb2c8"/><stop offset="0.82" stop-color="#5a6878"/><stop offset="1" stop-color="#2e3742"/></linearGradient><linearGradient id="mb988" x1="0" y1="0" x2="0" y2="1"><stop offset="0" stop-color="#c9d6e4"/><stop offset="1" stop-color="#7f93aa"/></linearGradient></defs>
<path d="M2 8 L4 6 L26 1.5 L30 2.5 L31 4 V22 L29 25 L3 26 L1 24 Z" fill="url(#mg988)" stroke="#4d5866" stroke-width="0.7"/>
<path d="M4 8 L25.5 3.5 V20 L3.5 21 Z" fill="#ffffff"/>
<g stroke-width="1.4" fill="none"><path d="M6 11 L12 10 L16 11 L21 9 L25 10" stroke="#e02020"/><path d="M6 12 L12 11 L17 10 L25 9" stroke="#20c020"/><path d="M6 10 L15 9 L25 8" stroke="#2020f0"/><path d="M6 19 L10 17 L14 19 L18 17 L25 18" stroke="#ff20ff"/></g>
<path d="M2 21.5 L27 20.5 L28 25 L2.5 26 Z" fill="url(#mb988)"/>
<rect x="4" y="23" width="3" height="1.2" fill="#4a4a4a"/><rect x="21" y="22.5" width="3.5" height="1.2" fill="#4a4a4a"/><rect x="14" y="23" width="1.2" height="1" fill="#666"/>
<path d="M11 26 L20 25.5 L21 27.5 L23 29.5 H7 L9.5 27.5 Z" fill="#2a2f36"/></svg>
<div style="left:1027px;top:53px;width:2px;height:33px;border-left:1px solid #c5cad3;border-right:1px solid #ffffff"></div>
<svg style="position:absolute;left:1033px;top:53px" width="32" height="32" viewBox="0 0 32 32"><defs><linearGradient id="mg1033" x1="0" y1="0" x2="1" y2="0"><stop offset="0" stop-color="#e6ecf3"/><stop offset="0.75" stop-color="#9eb2c8"/><stop offset="0.82" stop-color="#5a6878"/><stop offset="1" stop-color="#2e3742"/></linearGradient><linearGradient id="mb1033" x1="0" y1="0" x2="0" y2="1"><stop offset="0" stop-color="#c9d6e4"/><stop offset="1" stop-color="#7f93aa"/></linearGradient></defs>
<path d="M2 8 L4 6 L26 1.5 L30 2.5 L31 4 V22 L29 25 L3 26 L1 24 Z" fill="url(#mg1033)" stroke="#4d5866" stroke-width="0.7"/>
<path d="M4 8 L25.5 3.5 V20 L3.5 21 Z" fill="#ffffff"/>
<path d="M4 7.5 L26 3.2 L26 21.5 L4 22 Z" fill="#333"/><g stroke-width="1.3" fill="none"><path d="M5 10 L25 6" stroke="#e0e020"/><path d="M5 14 L10 13 L15 14 L20 12 L25 12" stroke="#e06020"/><path d="M5 15 L10 14 L16 15 L25 13" stroke="#20a0f0"/><path d="M5 18 L25 16" stroke="#ff20ff"/><path d="M5 20 L25 19" stroke="#8060f0"/></g>
<path d="M2 21.5 L27 20.5 L28 25 L2.5 26 Z" fill="url(#mb1033)"/>
<rect x="4" y="23" width="3" height="1.2" fill="#4a4a4a"/><rect x="21" y="22.5" width="3.5" height="1.2" fill="#4a4a4a"/><rect x="14" y="23" width="1.2" height="1" fill="#666"/>
<path d="M11 26 L20 25.5 L21 27.5 L23 29.5 H7 L9.5 27.5 Z" fill="#2a2f36"/></svg>
<div style="left:0px;top:90px;width:1920px;height:4px;background:linear-gradient(#8a8a8a,#6e6e6e)"></div>
<div style="left:0px;top:94px;width:1920px;height:3px;background:#ffffff"></div>
<div style="left:0px;top:90px;width:2px;height:951px;background:#8a8a8a"></div>
<div style="left:2px;top:94px;width:1899px;height:947px;background:#ffffff"></div>
<div style="left:1901px;top:92px;width:19px;height:950px;background:#f0f0f0;border-left:1px solid #fafafa;border-right:1px solid #fafafa"></div>
<div style="left:1909px;top:109px;width:2px;height:866px;background:#808080"></div>
<div style="left:2px;top:156px;width:1899px;height:3px;background:#777"></div>
<div style="left:2px;top:379px;width:1899px;height:5px;background:linear-gradient(#8a8a8a,#6e6e6e)"></div>
<div style="left:385px;top:384px;width:4px;height:634px;background:linear-gradient(90deg,#8a8a8a,#6e6e6e)"></div>
<div style="left:1897px;top:92px;width:4px;height:929px;background:#777"></div>
<div style="left:5px;top:97px;width:1301px;height:57px;background:#787878"></div>
<div style="left:6px;top:98px;width:1298px;height:17px;background:linear-gradient(#e3eaf5,#edf2f9);border-radius:5px 5px 0 0"></div>
<div style="left:6px;top:115px;width:1298px;height:1px;background:#8e8e8e"></div>
<div style="left:6px;top:116px;width:1298px;height:36px;background:#ececec"></div>
<div class="t" style="left:12px;top:102px;font-size:11px;font-weight:bold;color:#3d3a36;transform:scaleX(1.24);transform-origin:0 0;-webkit-text-stroke:0.25px #3d3a36;letter-spacing:0.1px">View</div>
<div style="left:7px;top:120px;width:199px;height:22px;background:#f0f0f0;border-top:2px solid #6a6a6a;border-left:2px solid #6a6a6a;border-right:1px solid #fff;border-bottom:1px solid #fff"></div>
<div style="left:10px;top:124px;width:177px;height:16px;background:#0078d7"></div>
<div class="t" style="left:11px;top:126px;font-size:13px;color:#fff;letter-spacing:0.55px">Near white scale</div>
<div style="left:188px;top:123px;width:17px;height:17px;background:#f0f0f0;border-right:1px solid #696969;border-bottom:1px solid #696969;border-left:1px solid #fff;border-top:1px solid #fff"></div>
<svg style="position:absolute;left:194px;top:130px" width="7" height="4" viewBox="0 0 7 4"><path d="M0 0 H7 L3.5 4Z" fill="#000"/></svg>
<div style="left:216px;top:119px;width:1060px;height:27px;background:#f0f0f0;border-top:1px solid #c8c8c8;border-left:1px solid #c8c8c8;border-bottom:1px solid #fafafa;border-right:1px solid #fafafa"></div>
<div class="t" style="left:217px;top:121px;font-size:16px;font-weight:bold;color:#000;letter-spacing:0px">Color Space: HDTV Rec709 modified, White Point: CUSTOM, EOTF:&nbsp; SDR, Power law (black compensation) w/gamma = 2.40, # of measur...</div>
<div style="left:1278px;top:120px;width:18px;height:13px;background:#f0f0f0;border-right:1px solid #6a6a6a;border-bottom:1px solid #6a6a6a;border-top:1px solid #fff;border-left:1px solid #fff"></div>
<svg style="position:absolute;left:1283px;top:124px" width="7" height="4" viewBox="0 0 7 4"><path d="M0 4 H7 L3.5 0Z" fill="#000"/></svg>
<div style="left:1278px;top:133px;width:18px;height:13px;background:#f0f0f0;border-right:1px solid #6a6a6a;border-bottom:1px solid #6a6a6a;border-top:1px solid #fff;border-left:1px solid #fff"></div>
<svg style="position:absolute;left:1283px;top:137px" width="7" height="4" viewBox="0 0 7 4"><path d="M0 0 H7 L3.5 4Z" fill="#000"/></svg>
<div style="left:1306px;top:92px;width:2px;height:65px;background:#737373"></div>
<div style="left:1311px;top:97px;width:306px;height:57px;background:#787878"></div>
<div style="left:1312px;top:98px;width:303px;height:17px;background:linear-gradient(#e3eaf5,#edf2f9);border-radius:5px 5px 0 0"></div>
<div style="left:1312px;top:115px;width:303px;height:1px;background:#8e8e8e"></div>
<div style="left:1312px;top:116px;width:303px;height:36px;background:#ececec"></div>
<div class="t" style="left:1318px;top:102px;font-size:11px;font-weight:bold;color:#3d3a36;transform:scaleX(1.24);transform-origin:0 0;-webkit-text-stroke:0.25px #3d3a36;letter-spacing:0.1px">Sensor</div>
<div style="left:1316px;top:117px;width:290px;height:13px;background:#eeeeee"></div>
<div class="t" style="left:1316px;top:118px;font-size:13px;letter-spacing:0.55px;color:#000">Simulated sensor</div>
<div style="left:1318px;top:134px;width:62px;height:14px;background:#efefef"></div>
<div class="t" style="left:1318px;top:135px;font-size:13px;letter-spacing:0.5px;color:#000">Adaptive</div>
<svg style="position:absolute;left:1424px;top:135px" width="13" height="13" viewBox="0 0 13 13"><path d="M0.5 0.5 L12 6.5 L0.5 12.5Z" fill="#78d048" stroke="#4a9a30" stroke-width="0.6"/></svg>
<svg style="position:absolute;left:1587px;top:132px" width="20" height="19" viewBox="0 0 20 19"><defs><linearGradient id="ei" x1="0" y1="0" x2="1" y2="1"><stop offset="0" stop-color="#8fc0f8"/><stop offset="1" stop-color="#1850b8"/></linearGradient></defs><path d="M1 3 L11 0.5 L13 14 L3 17.5 Z" fill="url(#ei)" stroke="#1a3f90" stroke-width="0.8"/><path d="M3 4 L10.5 2.2 L12 12.5 L4.2 15 Z" fill="#e8f0fa"/><path d="M5 9 L7 12 L10 5" stroke="#e0b020" stroke-width="1.3" fill="none"/><path d="M8 13 L17 8" stroke="#3070d0" stroke-width="2"/><circle cx="17.5" cy="7.5" r="1.5" fill="#e03030"/></svg>
<div style="left:1621px;top:97px;width:121px;height:57px;background:#787878"></div>
<div style="left:1622px;top:98px;width:118px;height:17px;background:linear-gradient(#e3eaf5,#edf2f9);border-radius:5px 5px 0 0"></div>
<div style="left:1622px;top:115px;width:118px;height:1px;background:#8e8e8e"></div>
<div style="left:1622px;top:116px;width:118px;height:36px;background:#ececec"></div>
<div class="t" style="left:1628px;top:102px;font-size:11px;font-weight:bold;color:#3d3a36;transform:scaleX(1.24);transform-origin:0 0;-webkit-text-stroke:0.25px #3d3a36;letter-spacing:0.1px">Generator</div>
<div class="t" style="left:1624px;top:118px;font-size:13px;letter-spacing:0.15px;color:#000">DVD manual</div>
<svg style="position:absolute;left:1717px;top:133px" width="20" height="19" viewBox="0 0 20 19"><defs><linearGradient id="ei" x1="0" y1="0" x2="1" y2="1"><stop offset="0" stop-color="#8fc0f8"/><stop offset="1" stop-color="#1850b8"/></linearGradient></defs><path d="M1 3 L11 0.5 L13 14 L3 17.5 Z" fill="url(#ei)" stroke="#1a3f90" stroke-width="0.8"/><path d="M3 4 L10.5 2.2 L12 12.5 L4.2 15 Z" fill="#e8f0fa"/><path d="M5 9 L7 12 L10 5" stroke="#e0b020" stroke-width="1.3" fill="none"/><path d="M8 13 L17 8" stroke="#3070d0" stroke-width="2"/><circle cx="17.5" cy="7.5" r="1.5" fill="#e03030"/></svg>
<div style="left:1745px;top:97px;width:151px;height:57px;background:#787878"></div>
<div style="left:1746px;top:98px;width:148px;height:17px;background:linear-gradient(#e3eaf5,#edf2f9);border-radius:5px 5px 0 0"></div>
<div style="left:1746px;top:115px;width:148px;height:1px;background:#8e8e8e"></div>
<div style="left:1746px;top:116px;width:148px;height:36px;background:#ececec"></div>
<div class="t" style="left:1752px;top:102px;font-size:11px;font-weight:bold;color:#3d3a36;transform:scaleX(1.24);transform-origin:0 0;-webkit-text-stroke:0.25px #3d3a36;letter-spacing:0.1px">Parameters</div>
<div style="left:1754px;top:117px;width:96px;height:15px;background:#efefef"></div>
<div style="left:1755px;top:119px;width:13px;height:13px;background:#fff;border-top:2px solid #555;border-left:2px solid #555;border-right:1px solid #e6e6e6;border-bottom:1px solid #e6e6e6"></div>
<div class="t" style="left:1773px;top:119px;font-size:13px;letter-spacing:0.3px;color:#000">Reference</div>
<div style="left:1755px;top:136px;width:13px;height:13px;background:#f4f4f4;border-top:2px solid #c8c8c8;border-left:2px solid #c8c8c8;border-right:1px solid #e6e6e6;border-bottom:1px solid #e6e6e6"></div>
<div class="t" style="left:1773px;top:136px;font-size:13px;letter-spacing:0.35px;color:#b4b4b4">XYZ Adjustment</div>
<div style="left:5px;top:162px;width:1804px;height:217px;background:#787878"></div>
<div style="left:6px;top:163px;width:1802px;height:212px;background:#ebebeb"></div>
<div style="left:6px;top:163px;width:1802px;height:16px;background:linear-gradient(#e3eaf5,#edf2f9);border-radius:5px 5px 0 0;overflow:hidden"></div>
<div style="left:6px;top:179px;width:1px;height:198px;background:#00e000"></div>
<div style="left:6px;top:375.5px;width:1802px;height:1.6px;background:#00e000"></div>
<div style="left:1807px;top:170px;width:1.3px;height:207px;background:#00e000"></div>
<div style="left:1790px;top:178.5px;width:18px;height:1.3px;background:#00e000"></div>
<svg style="position:absolute;left:1798px;top:162px" width="11" height="10" viewBox="0 0 11 10"><path d="M1 1.5 Q9.5 1.5 9.5 9" stroke="#00e000" stroke-width="1.2" fill="none"/></svg>
<svg style="position:absolute;left:5px;top:162px" width="8" height="8" viewBox="0 0 8 8"><path d="M6 1.5 Q2 2 1.5 7" stroke="#00e000" stroke-width="1.2" fill="none" stroke-dasharray="1.5 3"/></svg>
<div style="left:8px;top:164px;width:1500px;height:12px;overflow:hidden"><div class="t" style="left:7px;top:2px;font-size:11px;font-weight:bold;color:#3d3a36">( Average dE: 0.35 [0.28,0.18,0.00] max: 0.59 [CIE2000] ) [Absolute Y w/gamma]</div>
</div>
<div style="left:8px;top:176px;width:1782px;height:198px;background:#f0f0f0;border-top:2px solid #6e6e6e;border-left:2px solid #6e6e6e;border-right:1px solid #fff;border-bottom:1px solid #fff"></div>
<div style="left:10px;top:178px;width:54px;height:23px;background:#f0f0f0;border-top:1px solid #fff;border-left:1px solid #fff;border-right:1px solid #6e6e6e;border-bottom:1px solid #6e6e6e;box-shadow:0 1px 0 #8a8a8a"></div>
<div class="t" style="left:10px;top:184px;width:54px;text-align:center;font-size:12px;font-weight:bold;color:#111">% White</div>
<div style="left:65px;top:178px;width:342px;height:23px;background:#808080;border-top:1px solid #fff;border-left:1px solid #fff;border-right:1px solid #6e6e6e;border-bottom:1px solid #6e6e6e;box-shadow:0 1px 0 #8a8a8a"></div>
<div class="t" style="left:65px;top:184px;width:342px;text-align:center;font-size:12px;font-weight:bold;color:#111">96</div>
<div style="left:408px;top:178px;width:340px;height:23px;background:#989898;border-top:1px solid #fff;border-left:1px solid #fff;border-right:1px solid #6e6e6e;border-bottom:1px solid #6e6e6e;box-shadow:0 1px 0 #8a8a8a"></div>
<div class="t" style="left:408px;top:184px;width:340px;text-align:center;font-size:12px;font-weight:bold;color:#111">97</div>
<div style="left:749px;top:178px;width:340px;height:23px;background:#b0b0b0;border-top:1px solid #fff;border-left:1px solid #fff;border-right:1px solid #6e6e6e;border-bottom:1px solid #6e6e6e;box-shadow:0 1px 0 #8a8a8a"></div>
<div class="t" style="left:749px;top:184px;width:340px;text-align:center;font-size:12px;font-weight:bold;color:#111">98</div>
<div style="left:1090px;top:178px;width:340px;height:23px;background:#c8c8c8;border-top:1px solid #fff;border-left:1px solid #fff;border-right:1px solid #6e6e6e;border-bottom:1px solid #6e6e6e;box-shadow:0 1px 0 #8a8a8a"></div>
<div class="t" style="left:1090px;top:184px;width:340px;text-align:center;font-size:12px;font-weight:bold;color:#111">99</div>
<div style="left:1431px;top:178px;width:340px;height:23px;background:#e0e0e0;border-top:1px solid #fff;border-left:1px solid #fff;border-right:1px solid #6e6e6e;border-bottom:1px solid #6e6e6e;box-shadow:0 1px 0 #8a8a8a"></div>
<div class="t" style="left:1431px;top:184px;width:340px;text-align:center;font-size:12px;font-weight:bold;color:#111">100</div>
<div style="left:10px;top:201px;width:54px;height:26px;background:#f0f0f0;border-right:1px solid #6e6e6e;border-bottom:1px solid #6e6e6e"></div>
<div class="t" style="left:10px;top:207px;width:54px;text-align:center;font-size:12px;font-weight:bold;color:#111">x</div>
<div style="left:65px;top:201px;width:342px;height:26px;background:#ffffff;border-right:1px solid #c4c4c4;border-bottom:1px solid #c4c4c4"></div>
<div class="t" style="left:65px;top:209px;width:339px;text-align:right;font-size:12px;color:#111;letter-spacing:-0.6px;">0.3102</div>
<div style="left:408px;top:201px;width:340px;height:26px;background:#ffffff;border-right:1px solid #c4c4c4;border-bottom:1px solid #c4c4c4"></div>
<div class="t" style="left:408px;top:209px;width:337px;text-align:right;font-size:12px;color:#111;letter-spacing:-0.6px;">0.3102</div>
<div style="left:749px;top:201px;width:340px;height:26px;background:#ffffff;border-right:1px solid #c4c4c4;border-bottom:1px solid #c4c4c4"></div>
<div class="t" style="left:749px;top:209px;width:337px;text-align:right;font-size:12px;color:#111;letter-spacing:-0.6px;">0.3103</div>
<div style="left:1090px;top:201px;width:340px;height:26px;background:#ffffff;border-right:1px solid #c4c4c4;border-bottom:1px solid #c4c4c4"></div>
<div class="t" style="left:1090px;top:209px;width:337px;text-align:right;font-size:12px;color:#111;letter-spacing:-0.6px;">0.3102</div>
<div style="left:1431px;top:201px;width:340px;height:26px;background:#ffffff;border-right:1px solid #c4c4c4;border-bottom:1px solid #c4c4c4"></div>
<div class="t" style="left:1431px;top:209px;width:337px;text-align:right;font-size:12px;color:#111;letter-spacing:-0.6px;">0.3104</div>
<div style="left:10px;top:227px;width:54px;height:26px;background:#f0f0f0;border-right:1px solid #6e6e6e;border-bottom:1px solid #6e6e6e"></div>
<div class="t" style="left:10px;top:233px;width:54px;text-align:center;font-size:12px;font-weight:bold;color:#111">y</div>
<div style="left:65px;top:227px;width:342px;height:26px;background:#ffffff;border-right:1px solid #c4c4c4;border-bottom:1px solid #c4c4c4"></div>
<div class="t" style="left:65px;top:235px;width:339px;text-align:right;font-size:12px;color:#111;letter-spacing:-0.6px;">0.3300</div>
<div style="left:408px;top:227px;width:340px;height:26px;background:#ffffff;border-right:1px solid #c4c4c4;border-bottom:1px solid #c4c4c4"></div>
<div class="t" style="left:408px;top:235px;width:337px;text-align:right;font-size:12px;color:#111;letter-spacing:-0.6px;">0.3300</div>
<div style="left:749px;top:227px;width:340px;height:26px;background:#ffffff;border-right:1px solid #c4c4c4;border-bottom:1px solid #c4c4c4"></div>
<div class="t" style="left:749px;top:235px;width:337px;text-align:right;font-size:12px;color:#111;letter-spacing:-0.6px;">0.3300</div>
<div style="left:1090px;top:227px;width:340px;height:26px;background:#ffffff;border-right:1px solid #c4c4c4;border-bottom:1px solid #c4c4c4"></div>
<div class="t" style="left:1090px;top:235px;width:337px;text-align:right;font-size:12px;color:#111;letter-spacing:-0.6px;">0.3301</div>
<div style="left:1431px;top:227px;width:340px;height:26px;background:#ffffff;border-right:1px solid #c4c4c4;border-bottom:1px solid #c4c4c4"></div>
<div class="t" style="left:1431px;top:235px;width:337px;text-align:right;font-size:12px;color:#111;letter-spacing:-0.6px;">0.3302</div>
<div style="left:10px;top:253px;width:54px;height:26px;background:#f0f0f0;border-right:1px solid #6e6e6e;border-bottom:1px solid #6e6e6e"></div>
<div class="t" style="left:10px;top:259px;width:54px;text-align:center;font-size:12px;font-weight:bold;color:#111">Y</div>
<div style="left:65px;top:253px;width:342px;height:26px;background:#ffffff;border-right:1px solid #c4c4c4;border-bottom:1px solid #c4c4c4"></div>
<div class="t" style="left:65px;top:261px;width:339px;text-align:right;font-size:12px;color:#111;letter-spacing:-0.6px;">107.224</div>
<div style="left:408px;top:253px;width:340px;height:26px;background:#ffffff;border-right:1px solid #c4c4c4;border-bottom:1px solid #c4c4c4"></div>
<div class="t" style="left:408px;top:261px;width:337px;text-align:right;font-size:12px;color:#111;letter-spacing:-0.6px;">109.309</div>
<div style="left:749px;top:253px;width:340px;height:26px;background:#ffffff;border-right:1px solid #c4c4c4;border-bottom:1px solid #c4c4c4"></div>
<div class="t" style="left:749px;top:261px;width:337px;text-align:right;font-size:12px;color:#111;letter-spacing:-0.6px;">112.205</div>
<div style="left:1090px;top:253px;width:340px;height:26px;background:#ffffff;border-right:1px solid #c4c4c4;border-bottom:1px solid #c4c4c4"></div>
<div class="t" style="left:1090px;top:261px;width:337px;text-align:right;font-size:12px;color:#111;letter-spacing:-0.6px;">114.395</div>
<div style="left:1431px;top:253px;width:340px;height:26px;background:#ffffff;border-right:1px solid #c4c4c4;border-bottom:1px solid #c4c4c4"></div>
<div class="t" style="left:1431px;top:261px;width:337px;text-align:right;font-size:12px;color:#111;letter-spacing:-0.6px;">117.215</div>
<div style="left:10px;top:279px;width:54px;height:26px;background:#f0f0f0;border-right:1px solid #6e6e6e;border-bottom:1px solid #6e6e6e"></div>
<div class="t" style="left:10px;top:285px;width:54px;text-align:center;font-size:12px;font-weight:bold;color:#111">Delta E</div>
<div style="left:65px;top:279px;width:342px;height:26px;background:#b0ffb0;border-right:1px solid #c4c4c4;border-bottom:1px solid #c4c4c4"></div>
<div class="t" style="left:65px;top:287px;width:339px;text-align:right;font-size:12px;color:#111;font-weight:bold;letter-spacing:-0.2px;">0.6</div>
<div style="left:408px;top:279px;width:340px;height:26px;background:#b0ffb0;border-right:1px solid #c4c4c4;border-bottom:1px solid #c4c4c4"></div>
<div class="t" style="left:408px;top:287px;width:337px;text-align:right;font-size:12px;color:#111;font-weight:bold;letter-spacing:-0.2px;">0.3</div>
<div style="left:749px;top:279px;width:340px;height:26px;background:#b0ffb0;border-right:1px solid #c4c4c4;border-bottom:1px solid #c4c4c4"></div>
<div class="t" style="left:749px;top:287px;width:337px;text-align:right;font-size:12px;color:#111;font-weight:bold;letter-spacing:-0.2px;">0.4</div>
<div style="left:1090px;top:279px;width:340px;height:26px;background:#b0ffb0;border-right:1px solid #c4c4c4;border-bottom:1px solid #c4c4c4"></div>
<div class="t" style="left:1090px;top:287px;width:337px;text-align:right;font-size:12px;color:#111;font-weight:bold;letter-spacing:-0.2px;">0.3</div>
<div style="left:1431px;top:279px;width:340px;height:26px;background:#b0ffb0;border-right:1px solid #c4c4c4;border-bottom:1px solid #c4c4c4"></div>
<div class="t" style="left:1431px;top:287px;width:337px;text-align:right;font-size:12px;color:#111;font-weight:bold;letter-spacing:-0.2px;">0.2</div>
<div style="left:10px;top:305px;width:54px;height:25px;background:#f0f0f0;border-right:1px solid #6e6e6e;border-bottom:1px solid #6e6e6e"></div>
<div class="t" style="left:10px;top:311px;width:54px;text-align:center;font-size:12px;font-weight:bold;color:#111">delta xy</div>
<div style="left:65px;top:305px;width:342px;height:25px;background:#f0f0f0;border-right:1px solid #c4c4c4;border-bottom:1px solid #c4c4c4"></div>
<div class="t" style="left:65px;top:313px;width:339px;text-align:right;font-size:12px;color:#111;letter-spacing:-0.6px;">0.0002</div>
<div style="left:408px;top:305px;width:340px;height:25px;background:#f0f0f0;border-right:1px solid #c4c4c4;border-bottom:1px solid #c4c4c4"></div>
<div class="t" style="left:408px;top:313px;width:337px;text-align:right;font-size:12px;color:#111;letter-spacing:-0.6px;">0.0002</div>
<div style="left:749px;top:305px;width:340px;height:25px;background:#f0f0f0;border-right:1px solid #c4c4c4;border-bottom:1px solid #c4c4c4"></div>
<div class="t" style="left:749px;top:313px;width:337px;text-align:right;font-size:12px;color:#111;letter-spacing:-0.6px;">0.0003</div>
<div style="left:1090px;top:305px;width:340px;height:25px;background:#f0f0f0;border-right:1px solid #c4c4c4;border-bottom:1px solid #c4c4c4"></div>
<div class="t" style="left:1090px;top:313px;width:337px;text-align:right;font-size:12px;color:#111;letter-spacing:-0.6px;">0.0002</div>
<div style="left:1431px;top:305px;width:340px;height:25px;background:#f0f0f0;border-right:1px solid #c4c4c4;border-bottom:1px solid #c4c4c4"></div>
<div class="t" style="left:1431px;top:313px;width:337px;text-align:right;font-size:12px;color:#111;letter-spacing:-0.6px;">0.0004</div>
<div style="left:10px;top:330px;width:54px;height:25px;background:#f0f0f0;border-right:1px solid #6e6e6e;border-bottom:1px solid #6e6e6e"></div>
<div class="t" style="left:10px;top:336px;width:54px;text-align:center;font-size:12px;font-weight:bold;color:#111">Y target</div>
<div style="left:65px;top:330px;width:342px;height:25px;background:#e0e0e0;border-right:1px solid #c4c4c4;border-bottom:1px solid #c4c4c4"></div>
<div class="t" style="left:65px;top:338px;width:339px;text-align:right;font-size:12px;color:#111;letter-spacing:-0.6px;">105.739</div>
<div style="left:408px;top:330px;width:340px;height:25px;background:#e0e0e0;border-right:1px solid #c4c4c4;border-bottom:1px solid #c4c4c4"></div>
<div class="t" style="left:408px;top:338px;width:337px;text-align:right;font-size:12px;color:#111;letter-spacing:-0.6px;">108.172</div>
<div style="left:749px;top:330px;width:340px;height:25px;background:#e0e0e0;border-right:1px solid #c4c4c4;border-bottom:1px solid #c4c4c4"></div>
<div class="t" style="left:749px;top:338px;width:337px;text-align:right;font-size:12px;color:#111;letter-spacing:-0.6px;">110.638</div>
<div style="left:1090px;top:330px;width:340px;height:25px;background:#e0e0e0;border-right:1px solid #c4c4c4;border-bottom:1px solid #c4c4c4"></div>
<div class="t" style="left:1090px;top:338px;width:337px;text-align:right;font-size:12px;color:#111;letter-spacing:-0.6px;">113.136</div>
<div style="left:1431px;top:330px;width:340px;height:25px;background:#e0e0e0;border-right:1px solid #c4c4c4;border-bottom:1px solid #c4c4c4"></div>
<div class="t" style="left:1431px;top:338px;width:337px;text-align:right;font-size:12px;color:#111;letter-spacing:-0.6px;">116.944</div>
<svg style="position:absolute;left:1776px;top:183px" width="10" height="6" viewBox="0 0 10 6"><path d="M0 6 L5 0 L10 6Z" fill="#a3a3a3"/></svg>
<svg style="position:absolute;left:1776px;top:343px" width="10" height="6" viewBox="0 0 10 6"><path d="M0 0 L5 6 L10 0Z" fill="#a3a3a3"/></svg>
<svg style="position:absolute;left:15px;top:360px" width="6" height="9" viewBox="0 0 6 9"><path d="M6 0 L0 4.5 L6 9Z" fill="#a3a3a3"/></svg>
<svg style="position:absolute;left:1759px;top:359px" width="6" height="10" viewBox="0 0 6 10"><path d="M0 0 L6 5 L0 10Z" fill="#a3a3a3"/></svg>
<div style="left:1810px;top:159px;width:2px;height:220px;background:#777"></div>
<div style="left:1812px;top:261px;width:85px;height:118px;background:#898989"></div>
<div style="left:1815px;top:162px;width:80px;height:98px;background:#ffffff"></div>
<div style="left:1815px;top:162px;width:81px;height:99px;background:#787878"></div>
<div style="left:1816px;top:163px;width:78px;height:17px;background:linear-gradient(#e3eaf5,#edf2f9);border-radius:5px 5px 0 0"></div>
<div style="left:1816px;top:180px;width:78px;height:1px;background:#8e8e8e"></div>
<div style="left:1816px;top:181px;width:78px;height:78px;background:#ececec"></div>
<div class="t" style="left:1822px;top:167px;font-size:11px;font-weight:bold;color:#3d3a36;transform:scaleX(1.24);transform-origin:0 0;-webkit-text-stroke:0.25px #3d3a36;letter-spacing:0.1px">Display</div>
<div style="left:1823px;top:180px;width:70px;height:15px;background:#eeeeee"></div>
<svg style="position:absolute;left:1823px;top:181px" width="12" height="12" viewBox="0 0 12 12"><circle cx="6" cy="6" r="5" fill="#fff"/><path d="M2.2 9.8 A5.3 5.3 0 0 1 9.8 2.2" stroke="#c8c8c8" stroke-width="1.3" fill="none"/><path d="M9.8 2.2 A5.3 5.3 0 0 1 2.2 9.8" stroke="#f4f4f4" stroke-width="1" fill="none"/></svg>
<div class="t" style="left:1841px;top:182px;font-size:13px;color:#b8b8b8;letter-spacing:0px">Sensor</div>
<div style="left:1823px;top:196px;width:70px;height:15px;background:#eeeeee"></div>
<svg style="position:absolute;left:1823px;top:197px" width="12" height="12" viewBox="0 0 12 12"><circle cx="6" cy="6" r="5" fill="#fff"/><path d="M2.2 9.8 A5.3 5.3 0 0 1 9.8 2.2" stroke="#707070" stroke-width="1.3" fill="none"/><path d="M9.8 2.2 A5.3 5.3 0 0 1 2.2 9.8" stroke="#f4f4f4" stroke-width="1" fill="none"/></svg>
<div class="t" style="left:1841px;top:198px;font-size:13px;color:#000;letter-spacing:0px">RGB</div>
<div style="left:1823px;top:212px;width:70px;height:15px;background:#eeeeee"></div>
<svg style="position:absolute;left:1823px;top:213px" width="12" height="12" viewBox="0 0 12 12"><circle cx="6" cy="6" r="5" fill="#fff"/><path d="M2.2 9.8 A5.3 5.3 0 0 1 9.8 2.2" stroke="#707070" stroke-width="1.3" fill="none"/><path d="M9.8 2.2 A5.3 5.3 0 0 1 2.2 9.8" stroke="#f4f4f4" stroke-width="1" fill="none"/></svg>
<div class="t" style="left:1841px;top:214px;font-size:13px;color:#000;letter-spacing:0px">XYZ</div>
<div style="left:1823px;top:228px;width:70px;height:15px;background:#eeeeee"></div>
<svg style="position:absolute;left:1823px;top:229px" width="12" height="12" viewBox="0 0 12 12"><circle cx="6" cy="6" r="5" fill="#fff"/><path d="M2.2 9.8 A5.3 5.3 0 0 1 9.8 2.2" stroke="#707070" stroke-width="1.3" fill="none"/><path d="M9.8 2.2 A5.3 5.3 0 0 1 2.2 9.8" stroke="#f4f4f4" stroke-width="1" fill="none"/></svg>
<div class="t" style="left:1841px;top:230px;font-size:13px;color:#000;letter-spacing:0px">xyz</div>
<div style="left:1823px;top:243px;width:70px;height:15px;background:#eeeeee"></div>
<svg style="position:absolute;left:1823px;top:244px" width="12" height="12" viewBox="0 0 12 12"><circle cx="6" cy="6" r="5" fill="#fff"/><path d="M2.2 9.8 A5.3 5.3 0 0 1 9.8 2.2" stroke="#707070" stroke-width="1.3" fill="none"/><path d="M9.8 2.2 A5.3 5.3 0 0 1 2.2 9.8" stroke="#f4f4f4" stroke-width="1" fill="none"/><circle cx="6" cy="6" r="1.8" fill="#000"/></svg>
<div class="t" style="left:1841px;top:245px;font-size:13px;color:#000;letter-spacing:0px">xyY</div>
<div style="left:1812px;top:264px;width:83px;height:30px;background:#ebebeb;border-top:1px solid #fff;border-left:1px solid #fff;border-right:1px solid #a0a0a0;border-bottom:1px solid #a0a0a0"></div>
<div class="t" style="left:1863px;top:274px;font-size:13px;color:#000;letter-spacing:0.6px">Go</div>
<div style="left:1812px;top:294px;width:83px;height:30px;background:#ebebeb;border-top:1px solid #fff;border-left:1px solid #fff;border-right:1px solid #a0a0a0;border-bottom:1px solid #a0a0a0"></div>
<div class="t" style="left:1851px;top:304px;font-size:13px;color:#000;letter-spacing:0.6px">Delete</div>
<div style="left:1812px;top:324px;width:83px;height:30px;background:#ebebeb;border-top:1px solid #fff;border-left:1px solid #fff;border-right:1px solid #a0a0a0;border-bottom:1px solid #a0a0a0"></div>
<div class="t" style="left:1858px;top:334px;font-size:13px;color:#000;letter-spacing:0.6px">Refs</div>
<svg style="position:absolute;left:1818px;top:267px" width="33" height="27" viewBox="0 0 33 27"><rect x="0" y="0" width="3.5" height="26" fill="#111"/><rect x="29.5" y="3" width="3.5" height="23" fill="#111"/><rect x="1" y="1" width="1.6" height="1.4" fill="#fff"/><rect x="1" y="4" width="1.6" height="1.4" fill="#fff"/><rect x="1" y="7" width="1.6" height="1.4" fill="#fff"/><rect x="1" y="10" width="1.6" height="1.4" fill="#fff"/><rect x="1" y="13" width="1.6" height="1.4" fill="#fff"/><rect x="1" y="16" width="1.6" height="1.4" fill="#fff"/><rect x="1" y="19" width="1.6" height="1.4" fill="#fff"/><rect x="1" y="22" width="1.6" height="1.4" fill="#fff"/><rect x="1" y="25" width="1.6" height="1.4" fill="#fff"/><rect x="30.5" y="4" width="1.6" height="1.4" fill="#fff"/><rect x="30.5" y="7" width="1.6" height="1.4" fill="#fff"/><rect x="30.5" y="10" width="1.6" height="1.4" fill="#fff"/><rect x="30.5" y="13" width="1.6" height="1.4" fill="#fff"/><rect x="30.5" y="16" width="1.6" height="1.4" fill="#fff"/><rect x="30.5" y="19" width="1.6" height="1.4" fill="#fff"/><rect x="30.5" y="22" width="1.6" height="1.4" fill="#fff"/><rect x="30.5" y="25" width="1.6" height="1.4" fill="#fff"/><path d="M3.5 1 Q9 -1 13 4 L12 26 H3.5Z" fill="#dcdcdc" stroke="#333" stroke-width="0.8"/><path d="M4 8 H8 Q10 10 8 12 H4 M4 15 H8 Q10 17 8 19 H4" stroke="#555" stroke-width="1.2" fill="#f2f2f2"/><path d="M23 3 L29.5 8 V26 H24Z" fill="#d8d8d8" stroke="#333" stroke-width="0.8"/><path d="M24 12 H28 M24 18 H28" stroke="#555" stroke-width="1.2"/><path d="M11 5 L19 1 L28 13 L21 26 H15 L9 14Z" fill="#f6f6f6" stroke="#111" stroke-width="1.8"/><path d="M10 12 L22 6 M12 20 L26 13" stroke="#111" stroke-width="1.6"/><path d="M16 1 L24 14 L18 26" stroke="#222" stroke-width="0.8" fill="none" stroke-dasharray="1 1.5"/></svg>
<svg style="position:absolute;left:1819px;top:296px" width="30" height="27" viewBox="0 0 30 27"><defs><linearGradient id="rb" x1="0" y1="0" x2="1" y2="0.3"><stop offset="0" stop-color="#f0faff"/><stop offset="0.5" stop-color="#a8d8f8"/><stop offset="1" stop-color="#3a8ad8"/></linearGradient></defs><path d="M1 4 Q14 0 28 1 L25 23 Q15 27 6 25 Z" fill="url(#rb)" stroke="#6aa8d8" stroke-width="0.8"/><path d="M2 4 Q14 7 28 1" fill="none" stroke="#4a90d0" stroke-width="1.2"/><ellipse cx="15" cy="22" rx="9" ry="3" fill="#e8f6ff" opacity="0.7"/><path d="M10.5 14 A5.5 5.5 0 0 1 20 9.5" stroke="#10a020" stroke-width="2.6" fill="none"/><path d="M21.5 7 L21 12 L17 10.5Z" fill="#10a020"/><path d="M20.5 14.5 A5.5 5.5 0 0 1 11 19" stroke="#10a020" stroke-width="2.6" fill="none"/><path d="M9.5 21.5 L10 16.5 L14 18Z" fill="#10a020"/></svg>
<svg style="position:absolute;left:1818px;top:329px" width="32" height="23" viewBox="0 0 32 23"><path d="M0 8 L2 6 L4 3 L5 1 L7 3 L8 7 L10 6 L12 9 L14 8 L15 3 L16 0 L18 1 L20 2 L21 4 L22 7 L24 9 L26 9 L27 7 L30 7 L32 9 V23 H0Z" fill="#ffff00"/><rect x="0" y="10" width="2" height="13" fill="#000060"/><rect x="2" y="9" width="2" height="14" fill="#ff00ff"/><rect x="4" y="4" width="4" height="19" fill="#0000ff"/><rect x="8" y="7" width="3" height="16" fill="#00ffff"/><rect x="11" y="10" width="4" height="13" fill="#00e000"/><rect x="15" y="2" width="6" height="21" fill="#ffff00"/><rect x="21" y="6" width="3" height="17" fill="#700000"/><rect x="24" y="10" width="8" height="13" fill="#ff0000"/></svg>
<div style="left:1818px;top:358px;width:56px;height:18px;background:#efefef"></div>
<div style="left:1818px;top:361px;width:13px;height:13px;background:#fff;border-top:2px solid #555;border-left:2px solid #555;border-right:1px solid #e6e6e6;border-bottom:1px solid #e6e6e6"></div>
<div class="t" style="left:1837px;top:360px;font-size:13px;color:#000;letter-spacing:0.4px">Edit</div>
<div style="left:5px;top:387px;width:378px;height:629px;background:#787878"></div>
<div style="left:6px;top:388px;width:375px;height:17px;background:linear-gradient(#e3eaf5,#edf2f9);border-radius:5px 5px 0 0"></div>
<div style="left:6px;top:405px;width:375px;height:1px;background:#8e8e8e"></div>
<div style="left:6px;top:406px;width:375px;height:608px;background:#ececec"></div>
<div class="t" style="left:12px;top:392px;font-size:11px;font-weight:bold;color:#3d3a36;transform:scaleX(1.24);transform-origin:0 0;-webkit-text-stroke:0.25px #3d3a36;letter-spacing:0.1px">Selected color</div>
<div style="left:17px;top:409px;width:111px;height:14px;background:#f0f0f0"></div>
<div class="t" style="left:18px;top:410px;font-size:13px;color:#111;letter-spacing:-0.05px">RGB Levels</div>
<div style="left:230px;top:407px;width:129px;height:15px;background:#f0f0f0"></div>
<div class="t" style="left:241px;top:408px;font-size:13px;color:#111;letter-spacing:0.55px">Current Measure</div>
<div style="left:14px;top:433px;width:200px;height:86px;background:#f0f0f0"></div>
<div style="left:14px;top:477px;width:200px;height:1px;background:repeating-linear-gradient(90deg,#7a7a7a 0 3px,transparent 3px 6px)"></div>
<div class="t" style="left:8.5px;top:496px;width:60px;text-align:center;font-family:'Liberation Serif',serif;font-weight:bold;font-size:12px;color:#111">0.0%</div>
<div class="t" style="left:59.5px;top:496px;width:60px;text-align:center;font-family:'Liberation Serif',serif;font-weight:bold;font-size:12px;color:#111">0.0%</div>
<div class="t" style="left:110.5px;top:496px;width:60px;text-align:center;font-family:'Liberation Serif',serif;font-weight:bold;font-size:12px;color:#111">0.0%</div>
<div class="t" style="left:162px;top:496px;width:60px;text-align:center;font-family:'Liberation Serif',serif;font-weight:bold;font-size:12px;color:#111">dE 0.0</div>
<svg style="position:absolute;left:14px;top:500px" width="200" height="19" viewBox="0 0 200 19"><rect x="0" y="13" width="200" height="6" fill="#000"/><path d="M1 14 Q24 4 47 14 Z" fill="#a00000" stroke="#000" stroke-width="1.3"/><path d="M52 14 Q75 4 98 14 Z" fill="#00a000" stroke="#000" stroke-width="1.3"/><path d="M103 14 Q126 4 149 14 Z" fill="#0000b0" stroke="#000" stroke-width="1.3"/><path d="M154 14 Q177 4 200 14 Z" fill="#d09010" stroke="#000" stroke-width="1.3"/></svg>
<div style="left:16px;top:533px;width:192px;height:74px;background:#f0f0f0"></div>
<div class="t" style="left:35px;top:535px;font-size:13px;font-weight:bold;color:#111;letter-spacing:0.65px">Measure</div>
<div class="t" style="left:127px;top:535px;font-size:13px;font-weight:bold;color:#111;letter-spacing:0.55px">Reference</div>
<div style="left:17px;top:622px;width:44px;height:15px;background:#f0f0f0"></div>
<div class="t" style="left:18px;top:624px;font-size:13px;color:#111;letter-spacing:0.2px">Target</div>
<div style="left:50px;top:638px;width:116px;height:89px;border:1px solid #000;background:conic-gradient(from 0deg at 50% 50%,#90ff00 0deg,#f0f000 35deg,#ffb000 52deg,#ff5000 70deg,#ff0000 90deg,#ff0070 128deg,#b000c0 165deg,#5000e0 200deg,#0000ff 232deg,#0060ff 260deg,#00b0c0 290deg,#00ff90 314deg,#50ff30 340deg,#90ff00 360deg)"></div>
<div style="left:66px;top:651px;width:83px;height:63px;background:#000;border:1px solid #fff;border-radius:8px"></div>
<svg style="position:absolute;left:64px;top:650px" width="90" height="66" viewBox="0 0 90 66"><path d="M44.5 2 V64" stroke="#fff" stroke-width="1" stroke-dasharray="3 2"/><path d="M1 32.5 H88" stroke="#fff" stroke-width="1" stroke-dasharray="3 2"/><ellipse cx="44.5" cy="32.5" rx="21" ry="16" fill="none" stroke="#fff" stroke-width="1" stroke-dasharray="3 2"/></svg>
<div style="left:220px;top:430px;width:154px;height:578px;background:#f0f0f0;border-top:2px solid #6e6e6e;border-left:2px solid #6e6e6e;border-right:1px solid #fff;border-bottom:1px solid #fff"></div>
<div style="left:222px;top:432px;width:59px;height:23px;background:#f0f0f0;border-right:1px solid #6e6e6e;border-bottom:1px solid #6e6e6e"></div>
<div class="t" style="left:222px;top:438px;width:58px;text-align:center;font-size:12px;font-weight:bold;color:#111">Y cd/m<sup style="font-size:8px;vertical-align:5px">2</sup></div>
<div style="left:281px;top:432px;width:74px;height:23px;background:#ffffff;border-bottom:1px solid #c4c4c4;border-right:1px solid #c4c4c4"></div>
<div style="left:222px;top:455px;width:59px;height:23px;background:#f0f0f0;border-right:1px solid #6e6e6e;border-bottom:1px solid #6e6e6e"></div>
<div class="t" style="left:222px;top:461px;width:58px;text-align:center;font-size:12px;font-weight:bold;color:#111">Y ftL</div>
<div style="left:281px;top:455px;width:74px;height:23px;background:#ffffff;border-bottom:1px solid #c4c4c4;border-right:1px solid #c4c4c4"></div>
<div style="left:222px;top:478px;width:59px;height:23px;background:#f0f0f0;border-right:1px solid #6e6e6e;border-bottom:1px solid #6e6e6e"></div>
<div class="t" style="left:222px;top:484px;width:58px;text-align:center;font-size:12px;font-weight:bold;color:#111">T°</div>
<div style="left:281px;top:478px;width:74px;height:23px;background:#ffffff;border-bottom:1px solid #c4c4c4;border-right:1px solid #c4c4c4"></div>
<div style="left:222px;top:501px;width:59px;height:23px;background:#f0f0f0;border-right:1px solid #6e6e6e;border-bottom:1px solid #6e6e6e"></div>
<div class="t" style="left:222px;top:507px;width:58px;text-align:center;font-size:12px;font-weight:bold;color:#111">X</div>
<div style="left:281px;top:501px;width:74px;height:23px;background:#e0e0e0;border-bottom:1px solid #c4c4c4;border-right:1px solid #c4c4c4"></div>
<div style="left:222px;top:524px;width:59px;height:23px;background:#f0f0f0;border-right:1px solid #6e6e6e;border-bottom:1px solid #6e6e6e"></div>
<div class="t" style="left:222px;top:530px;width:58px;text-align:center;font-size:12px;font-weight:bold;color:#111">Y</div>
<div style="left:281px;top:524px;width:74px;height:23px;background:#e0e0e0;border-bottom:1px solid #c4c4c4;border-right:1px solid #c4c4c4"></div>
<div style="left:222px;top:547px;width:59px;height:23px;background:#f0f0f0;border-right:1px solid #6e6e6e;border-bottom:1px solid #6e6e6e"></div>
<div class="t" style="left:222px;top:553px;width:58px;text-align:center;font-size:12px;font-weight:bold;color:#111">Z</div>
<div style="left:281px;top:547px;width:74px;height:23px;background:#e0e0e0;border-bottom:1px solid #c4c4c4;border-right:1px solid #c4c4c4"></div>
<div style="left:222px;top:570px;width:59px;height:23px;background:#f0f0f0;border-right:1px solid #6e6e6e;border-bottom:1px solid #6e6e6e"></div>
<div class="t" style="left:222px;top:576px;width:58px;text-align:center;font-size:12px;font-weight:bold;color:#111">R</div>
<div style="left:281px;top:570px;width:74px;height:23px;background:#ffffff;border-bottom:1px solid #c4c4c4;border-right:1px solid #c4c4c4"></div>
<div style="left:222px;top:593px;width:59px;height:23px;background:#f0f0f0;border-right:1px solid #6e6e6e;border-bottom:1px solid #6e6e6e"></div>
<div class="t" style="left:222px;top:599px;width:58px;text-align:center;font-size:12px;font-weight:bold;color:#111">G</div>
<div style="left:281px;top:593px;width:74px;height:23px;background:#ffffff;border-bottom:1px solid #c4c4c4;border-right:1px solid #c4c4c4"></div>
<div style="left:222px;top:616px;width:59px;height:23px;background:#f0f0f0;border-right:1px solid #6e6e6e;border-bottom:1px solid #6e6e6e"></div>
<div class="t" style="left:222px;top:622px;width:58px;text-align:center;font-size:12px;font-weight:bold;color:#111">B</div>
<div style="left:281px;top:616px;width:74px;height:23px;background:#ffffff;border-bottom:1px solid #c4c4c4;border-right:1px solid #c4c4c4"></div>
<div style="left:222px;top:639px;width:59px;height:23px;background:#f0f0f0;border-right:1px solid #6e6e6e;border-bottom:1px solid #6e6e6e"></div>
<div class="t" style="left:222px;top:645px;width:58px;text-align:center;font-size:12px;font-weight:bold;color:#111">x</div>
<div style="left:281px;top:639px;width:74px;height:23px;background:#e0e0e0;border-bottom:1px solid #c4c4c4;border-right:1px solid #c4c4c4"></div>
<div style="left:222px;top:662px;width:59px;height:23px;background:#f0f0f0;border-right:1px solid #6e6e6e;border-bottom:1px solid #6e6e6e"></div>
<div class="t" style="left:222px;top:668px;width:58px;text-align:center;font-size:12px;font-weight:bold;color:#111">y</div>
<div style="left:281px;top:662px;width:74px;height:23px;background:#e0e0e0;border-bottom:1px solid #c4c4c4;border-right:1px solid #c4c4c4"></div>
<div style="left:222px;top:685px;width:59px;height:23px;background:#f0f0f0;border-right:1px solid #6e6e6e;border-bottom:1px solid #6e6e6e"></div>
<div class="t" style="left:222px;top:691px;width:58px;text-align:center;font-size:12px;font-weight:bold;color:#111">Y</div>
<div style="left:281px;top:685px;width:74px;height:23px;background:#e0e0e0;border-bottom:1px solid #c4c4c4;border-right:1px solid #c4c4c4"></div>
<div style="left:222px;top:708px;width:59px;height:23px;background:#f0f0f0;border-right:1px solid #6e6e6e;border-bottom:1px solid #6e6e6e"></div>
<div class="t" style="left:222px;top:714px;width:58px;text-align:center;font-size:12px;font-weight:bold;color:#111">x</div>
<div style="left:281px;top:708px;width:74px;height:23px;background:#ffffff;border-bottom:1px solid #c4c4c4;border-right:1px solid #c4c4c4"></div>
<div style="left:222px;top:731px;width:59px;height:23px;background:#f0f0f0;border-right:1px solid #6e6e6e;border-bottom:1px solid #6e6e6e"></div>
<div class="t" style="left:222px;top:737px;width:58px;text-align:center;font-size:12px;font-weight:bold;color:#111">y</div>
<div style="left:281px;top:731px;width:74px;height:23px;background:#ffffff;border-bottom:1px solid #c4c4c4;border-right:1px solid #c4c4c4"></div>
<div style="left:222px;top:754px;width:59px;height:23px;background:#f0f0f0;border-right:1px solid #6e6e6e;border-bottom:1px solid #6e6e6e"></div>
<div class="t" style="left:222px;top:760px;width:58px;text-align:center;font-size:12px;font-weight:bold;color:#111">z</div>
<div style="left:281px;top:754px;width:74px;height:23px;background:#ffffff;border-bottom:1px solid #c4c4c4;border-right:1px solid #c4c4c4"></div>
<div style="left:222px;top:777px;width:59px;height:23px;background:#f0f0f0;border-right:1px solid #6e6e6e;border-bottom:1px solid #6e6e6e"></div>
<div class="t" style="left:222px;top:783px;width:58px;text-align:center;font-size:12px;font-weight:bold;color:#111">L</div>
<div style="left:281px;top:777px;width:74px;height:23px;background:#e0e0e0;border-bottom:1px solid #c4c4c4;border-right:1px solid #c4c4c4"></div>
<div style="left:222px;top:800px;width:59px;height:23px;background:#f0f0f0;border-right:1px solid #6e6e6e;border-bottom:1px solid #6e6e6e"></div>
<div class="t" style="left:222px;top:806px;width:58px;text-align:center;font-size:12px;font-weight:bold;color:#111">a</div>
<div style="left:281px;top:800px;width:74px;height:23px;background:#e0e0e0;border-bottom:1px solid #c4c4c4;border-right:1px solid #c4c4c4"></div>
<div style="left:222px;top:823px;width:59px;height:23px;background:#f0f0f0;border-right:1px solid #6e6e6e;border-bottom:1px solid #6e6e6e"></div>
<div class="t" style="left:222px;top:829px;width:58px;text-align:center;font-size:12px;font-weight:bold;color:#111">b</div>
<div style="left:281px;top:823px;width:74px;height:23px;background:#e0e0e0;border-bottom:1px solid #c4c4c4;border-right:1px solid #c4c4c4"></div>
<div style="left:222px;top:846px;width:59px;height:23px;background:#f0f0f0;border-right:1px solid #6e6e6e;border-bottom:1px solid #6e6e6e"></div>
<div class="t" style="left:222px;top:852px;width:58px;text-align:center;font-size:12px;font-weight:bold;color:#111">L</div>
<div style="left:281px;top:846px;width:74px;height:23px;background:#ffffff;border-bottom:1px solid #c4c4c4;border-right:1px solid #c4c4c4"></div>
<div style="left:222px;top:869px;width:59px;height:23px;background:#f0f0f0;border-right:1px solid #6e6e6e;border-bottom:1px solid #6e6e6e"></div>
<div class="t" style="left:222px;top:875px;width:58px;text-align:center;font-size:12px;font-weight:bold;color:#111">C</div>
<div style="left:281px;top:869px;width:74px;height:23px;background:#ffffff;border-bottom:1px solid #c4c4c4;border-right:1px solid #c4c4c4"></div>
<div style="left:222px;top:892px;width:59px;height:23px;background:#f0f0f0;border-right:1px solid #6e6e6e;border-bottom:1px solid #6e6e6e"></div>
<div class="t" style="left:222px;top:898px;width:58px;text-align:center;font-size:12px;font-weight:bold;color:#111">H</div>
<div style="left:281px;top:892px;width:74px;height:23px;background:#ffffff;border-bottom:1px solid #c4c4c4;border-right:1px solid #c4c4c4"></div>
<div style="left:222px;top:915px;width:59px;height:23px;background:#f0f0f0;border-right:1px solid #6e6e6e;border-bottom:1px solid #6e6e6e"></div>
<div class="t" style="left:222px;top:921px;width:58px;text-align:center;font-size:12px;font-weight:bold;color:#111">L</div>
<div style="left:281px;top:915px;width:74px;height:23px;background:#e0e0e0;border-bottom:1px solid #c4c4c4;border-right:1px solid #c4c4c4"></div>
<div style="left:222px;top:938px;width:59px;height:23px;background:#f0f0f0;border-right:1px solid #6e6e6e;border-bottom:1px solid #6e6e6e"></div>
<div class="t" style="left:222px;top:944px;width:58px;text-align:center;font-size:12px;font-weight:bold;color:#111">M</div>
<div style="left:281px;top:938px;width:74px;height:23px;background:#e0e0e0;border-bottom:1px solid #c4c4c4;border-right:1px solid #c4c4c4"></div>
<div style="left:222px;top:961px;width:59px;height:23px;background:#f0f0f0;border-right:1px solid #6e6e6e;border-bottom:1px solid #6e6e6e"></div>
<div class="t" style="left:222px;top:967px;width:58px;text-align:center;font-size:12px;font-weight:bold;color:#111">S</div>
<div style="left:281px;top:961px;width:74px;height:23px;background:#e0e0e0;border-bottom:1px solid #c4c4c4;border-right:1px solid #c4c4c4"></div>
<div style="left:222px;top:984px;width:133px;height:23px;background:#a0a0a0"></div>
<svg style="position:absolute;left:359px;top:437px" width="10" height="6" viewBox="0 0 10 6"><path d="M0 6 L5 0 L10 6Z" fill="#a3a3a3"/></svg>
<svg style="position:absolute;left:359px;top:996px" width="10" height="6" viewBox="0 0 10 6"><path d="M0 0 L5 6 L10 0Z" fill="#a3a3a3"/></svg>
<div style="left:391px;top:387px;width:1504px;height:629px;background:#787878"></div>
<div style="left:392px;top:388px;width:1501px;height:17px;background:linear-gradient(#e3eaf5,#edf2f9);border-radius:5px 5px 0 0"></div>
<div style="left:392px;top:405px;width:1501px;height:1px;background:#8e8e8e"></div>
<div style="left:392px;top:406px;width:1501px;height:608px;background:#ececec"></div>
<div class="t" style="left:398px;top:392px;font-size:11px;font-weight:bold;color:#3d3a36;transform:scaleX(1.24);transform-origin:0 0;-webkit-text-stroke:0.25px #3d3a36;letter-spacing:0.1px">Information</div>
<div style="left:396px;top:409px;width:302px;height:23px;background:#fff;border-top:2px solid #6a6a6a;border-left:2px solid #6a6a6a;border-right:1px solid #f4f4f4;border-bottom:1px solid #f4f4f4"></div>
<div class="t" style="left:401px;top:415px;font-size:13px;color:#000;letter-spacing:0.42px">NearBlack - NearWhite</div>
<div style="left:679px;top:412px;width:18px;height:18px;background:#f0f0f0;border-right:1px solid #696969;border-bottom:1px solid #696969;border-left:1px solid #fff;border-top:1px solid #fff"></div>
<svg style="position:absolute;left:685px;top:419px" width="7" height="4" viewBox="0 0 7 4"><path d="M0 0 H7 L3.5 4Z" fill="#000"/></svg>
<div style="left:398px;top:439px;width:748px;height:570px;border-top:1px solid #a8a8a8;border-left:1px solid #a8a8a8;border-right:1px solid #e8e8e8;border-bottom:1px solid #e8e8e8;background:#6e6e6e"></div>
<div style="left:1142px;top:441px;width:3px;height:567px;background:#fff"></div>
<div style="left:399px;top:1005px;width:746px;height:3px;background:#fff"></div>
<div style="left:1146px;top:439px;width:748px;height:570px;border-top:1px solid #a8a8a8;border-left:1px solid #a8a8a8;border-right:1px solid #e8e8e8;border-bottom:1px solid #e8e8e8;background:#6e6e6e"></div>
<div style="left:1890px;top:441px;width:3px;height:567px;background:#fff"></div>
<div style="left:1147px;top:1005px;width:746px;height:3px;background:#fff"></div>
<svg style="position:absolute;left:402px;top:443px" width="740" height="562" viewBox="0 0 740 562"><defs><linearGradient id="dk" x1="0" y1="0" x2="1" y2="0"><stop offset="0" stop-color="#1e1e1e"/><stop offset="1" stop-color="#0a0a0a"/></linearGradient></defs><rect width="740" height="562" fill="url(#dk)"/><rect x="0" y="505" width="740" height="1" fill="#004444"/><rect x="0" y="449" width="740" height="1" fill="#004444"/><rect x="0" y="393" width="740" height="1" fill="#004444"/><rect x="0" y="337" width="740" height="1" fill="#004444"/><rect x="0" y="280" width="740" height="1" fill="#004444"/><rect x="0" y="224" width="740" height="1" fill="#004444"/><rect x="0" y="168" width="740" height="1" fill="#004444"/><rect x="0" y="112" width="740" height="1" fill="#004444"/><rect x="0" y="56" width="740" height="1" fill="#004444"/><rect x="0" y="0" width="1" height="562" fill="#004444"/><rect x="185" y="0" width="1" height="562" fill="#004444"/><rect x="370" y="0" width="1" height="562" fill="#004444"/><rect x="555" y="0" width="1" height="562" fill="#004444"/><text x="2" y="502.1" font-family="Liberation Serif" font-size="14" fill="#d2d2d2">0.1 cd m-2</text><text x="2" y="445.9" font-family="Liberation Serif" font-size="14" fill="#d2d2d2">0.2 cd m-2</text><text x="2" y="389.7" font-family="Liberation Serif" font-size="14" fill="#d2d2d2">0.3 cd m-2</text><text x="2" y="333.5" font-family="Liberation Serif" font-size="14" fill="#d2d2d2">0.4 cd m-2</text><text x="2" y="277.3" font-family="Liberation Serif" font-size="14" fill="#d2d2d2">0.5 cd m-2</text><text x="2" y="221.1" font-family="Liberation Serif" font-size="14" fill="#d2d2d2">0.6 cd m-2</text><text x="2" y="164.9" font-family="Liberation Serif" font-size="14" fill="#d2d2d2">0.7 cd m-2</text><text x="2" y="108.7" font-family="Liberation Serif" font-size="14" fill="#d2d2d2">0.8 cd m-2</text><text x="2" y="52.5" font-family="Liberation Serif" font-size="14" fill="#d2d2d2">0.9 cd m-2</text><text x="187" y="558" font-family="Liberation Serif" font-size="14" fill="#e8e8e8">1% White</text><text x="372" y="558" font-family="Liberation Serif" font-size="14" fill="#e8e8e8">2% White</text><text x="557" y="558" font-family="Liberation Serif" font-size="14" fill="#e8e8e8">3% White</text><text x="385.0" y="14" font-family="Liberation Sans" font-weight="bold" font-size="15" fill="#d8d810" text-anchor="middle" letter-spacing="-0.15">Near Black Luminance Response</text><text x="730" y="520" font-family="Liberation Sans" font-weight="bold" font-size="16" fill="#5c5c5c" text-anchor="end">hcfr.sourceforge.net</text><polyline points="2,560.5 167,560 337,553 506,548 675,538" fill="none" stroke="#ffff00" stroke-width="2.2"/><polyline points="2,561 167,559 337,555 506,550 675,538" fill="none" stroke="#ffffff" stroke-width="1" stroke-dasharray="3 2"/><rect x="163" y="555" width="8" height="8" fill="#ffff00"/><rect x="333" y="548" width="8" height="8" fill="#ffff00"/><rect x="502" y="543" width="8" height="8" fill="#ffff00"/><rect x="-2" y="557" width="8" height="8" fill="#e6e6e6"/><rect x="163" y="555" width="8" height="8" fill="#e6e6e6"/><rect x="333" y="551" width="8" height="8" fill="#e6e6e6"/><rect x="502" y="546" width="8" height="8" fill="#e6e6e6"/><rect x="671" y="534" width="8" height="8" fill="#e6e6e6"/></svg>
<svg style="position:absolute;left:1150px;top:443px" width="740" height="562" viewBox="0 0 740 562"><defs><linearGradient id="lt" x1="0" y1="0" x2="1" y2="0"><stop offset="0" stop-color="#7c7c7c"/><stop offset="1" stop-color="#f8f8f8"/></linearGradient></defs><rect width="740" height="562" fill="url(#lt)"/><rect x="0" y="486.70" width="740" height="1.4" fill="#023e3e"/><rect x="0" y="411.70" width="740" height="1.4" fill="#023e3e"/><rect x="0" y="336.70" width="740" height="1.4" fill="#023e3e"/><rect x="0" y="261.70" width="740" height="1.4" fill="#023e3e"/><rect x="0" y="186.70" width="740" height="1.4" fill="#023e3e"/><rect x="0" y="111.70" width="740" height="1.4" fill="#023e3e"/><rect x="0" y="36.70" width="740" height="1.4" fill="#023e3e"/><rect x="0.00" y="0" width="1.4" height="562" fill="#023e3e"/><rect x="123.25" y="0" width="1.4" height="562" fill="#023e3e"/><rect x="246.70" y="0" width="1.4" height="562" fill="#023e3e"/><rect x="370.15" y="0" width="1.4" height="562" fill="#023e3e"/><rect x="493.60" y="0" width="1.4" height="562" fill="#023e3e"/><rect x="617.05" y="0" width="1.4" height="562" fill="#023e3e"/><text x="3" y="482.9" font-family="Liberation Serif" font-size="13.8" fill="#dcdcdc" letter-spacing="0.2">105 cd m-2</text><text x="3" y="407.9" font-family="Liberation Serif" font-size="13.8" fill="#dcdcdc" letter-spacing="0.2">107 cd m-2</text><text x="3" y="332.9" font-family="Liberation Serif" font-size="13.8" fill="#dcdcdc" letter-spacing="0.2">109 cd m-2</text><text x="3" y="257.9" font-family="Liberation Serif" font-size="13.8" fill="#dcdcdc" letter-spacing="0.2">111 cd m-2</text><text x="3" y="182.9" font-family="Liberation Serif" font-size="13.8" fill="#dcdcdc" letter-spacing="0.2">113 cd m-2</text><text x="3" y="107.9" font-family="Liberation Serif" font-size="13.8" fill="#dcdcdc" letter-spacing="0.2">115 cd m-2</text><text x="3" y="32.9" font-family="Liberation Serif" font-size="13.8" fill="#dcdcdc" letter-spacing="0.2">117 cd m-2</text><text x="125.5" y="558" font-family="Liberation Serif" font-size="13.8" fill="#111">95% White</text><text x="248.9" y="558" font-family="Liberation Serif" font-size="13.8" fill="#111">96% White</text><text x="372.4" y="558" font-family="Liberation Serif" font-size="13.8" fill="#111">97% White</text><text x="495.8" y="558" font-family="Liberation Serif" font-size="13.8" fill="#111">98% White</text><text x="619.2" y="558" font-family="Liberation Serif" font-size="13.8" fill="#111">99% White</text><text x="385" y="14" font-family="Liberation Sans" font-weight="bold" font-size="15" fill="#642c6c" text-anchor="middle" letter-spacing="-0.15">Near White Luminance Response</text><text x="730" y="520" font-family="Liberation Sans" font-weight="bold" font-size="16" fill="#8a8a8a" text-anchor="end">hcfr.sourceforge.net</text><polyline points="233,504 345,368 458,275 571,182 738,38.5" fill="none" stroke="#f4f4f4" stroke-width="1" stroke-dasharray="3 3"/><rect x="229" y="500" width="8" height="8" fill="#e4e4e4"/><rect x="341" y="364" width="8" height="8" fill="#e4e4e4"/><rect x="454" y="271" width="8" height="8" fill="#e4e4e4"/><rect x="567" y="178" width="8" height="8" fill="#e4e4e4"/><rect x="734" y="34.5" width="8" height="8" fill="#e4e4e4"/><polyline points="233,403 345,325 458,217 571,135 738,28.5" fill="none" stroke="#ffff00" stroke-width="2.5"/><rect x="229" y="399" width="8" height="8" fill="#ffff00"/><rect x="341" y="321" width="8" height="8" fill="#ffff00"/><rect x="454" y="213" width="8" height="8" fill="#ffff00"/><rect x="567" y="131" width="8" height="8" fill="#ffff00"/><rect x="734" y="24.5" width="8" height="8" fill="#ffff00"/></svg>
<div style="left:2px;top:1015px;width:1895px;height:3px;background:#ffffff"></div>
<div style="left:2px;top:1018px;width:1899px;height:3px;background:#777"></div>
<div style="left:2px;top:1021px;width:1899px;height:21px;background:#f0f0f0"></div>
<div style="left:19px;top:1030px;width:1824px;height:2px;background:#858585"></div>
<div style="left:0px;top:1042px;width:1920px;height:1px;background:#000"></div>
<div style="left:0px;top:1043px;width:1920px;height:18px;background:#f0f0f0"></div>
<div style="left:1px;top:1043px;width:17px;height:18px;background:#f0f0f0;border-top:1px solid #fff;border-left:1px solid #fff;border-right:1px solid #444;border-bottom:1px solid #444"></div>
<div style="left:18px;top:1043px;width:17px;height:18px;background:#f0f0f0;border-top:1px solid #fff;border-left:1px solid #fff;border-right:1px solid #444;border-bottom:1px solid #444"></div>
<div style="left:35px;top:1043px;width:19px;height:18px;background:#f0f0f0;border-top:1px solid #fff;border-left:1px solid #fff;border-right:1px solid #444;border-bottom:1px solid #444"></div>
<svg style="position:absolute;left:5px;top:1047px" width="10" height="10" viewBox="0 0 10 10"><path d="M1 1 L9 9 M9 1 L1 9" stroke="#000" stroke-width="1.4"/></svg>
<svg style="position:absolute;left:24px;top:1048px" width="5" height="9" viewBox="0 0 5 9"><path d="M5 0 L0 4.5 L5 9Z" fill="#000"/></svg>
<svg style="position:absolute;left:41px;top:1048px" width="5" height="9" viewBox="0 0 5 9"><path d="M0 0 L5 4.5 L0 9Z" fill="#000"/></svg>
<svg style="position:absolute;left:0px;top:1042px" width="280" height="19" viewBox="0 0 280 19"><path d="M128 0.5 L121 17.5 M124 9 L127 17.5 H195 L193 0.5 M193 0.5 L200 17.5 H261 L269 0.5" fill="none" stroke="#222" stroke-width="1"/><path d="M55 0.5 L62 17.5 H120 L128 0.5 Z" fill="#ffffff" stroke="#000" stroke-width="1"/></svg>
<div style="left:54px;top:1042px;width:216px;height:1px;background:#000"></div>
<div class="t" style="left:67px;top:1047px;font-size:11px;font-weight:bold;color:#000;letter-spacing:-0.15px">Measures</div>
<div class="t" style="left:135px;top:1047px;font-size:11px;color:#111;letter-spacing:-0.85px">RGB Levels</div>
<div class="t" style="left:208px;top:1047px;font-size:11px;color:#111;letter-spacing:-0.75px">Luminance</div>
<svg style="position:absolute;left:1751px;top:1044px" width="15" height="15" viewBox="0 0 15 15"><path d="M0.5 0.5 H14 V10 L11 14 H9 L7.5 11 L6 14 H3 L0.5 10Z" fill="#808000" stroke="#222" stroke-width="0.8"/><rect x="3" y="3" width="8" height="5" fill="#e02020"/><path d="M4 6 H9 L8 4" stroke="#fff" stroke-width="0.8" fill="none"/><rect x="10" y="9" width="4" height="4" fill="#ffff00"/></svg>
<div style="left:1847px;top:1045px;width:13px;height:13px;background:#fff;border-top:2px solid #555;border-left:2px solid #555;border-right:1px solid #e6e6e6;border-bottom:1px solid #e6e6e6"></div>
<div class="t" style="left:1864px;top:1046px;font-size:12px;color:#000;letter-spacing:-0.45px">Reference</div>
<div style="left:0px;top:1061px;width:1920px;height:19px;background:#e9eef7"></div>
<div class="t" style="left:2px;top:1065px;font-size:12.5px;color:#111;letter-spacing:-0.5px">Ready</div>
<div style="left:1742px;top:1062px;width:76px;height:18px;border:1px solid #a9bcd6;border-right:none;border-bottom:none"></div>
<div style="left:1820px;top:1062px;width:29px;height:18px;border:1px solid #a9bcd6;border-right:none;border-bottom:none"></div>
<div style="left:1851px;top:1062px;width:33px;height:18px;border:1px solid #a9bcd6;border-right:none;border-bottom:none"></div>
<div style="left:1887px;top:1062px;width:33px;height:18px;border:1px solid #a9bcd6;border-right:none;border-bottom:none"></div>
<div class="t" style="left:1853px;top:1066px;font-size:12.5px;color:#111">NUM</div>
</body></html>
